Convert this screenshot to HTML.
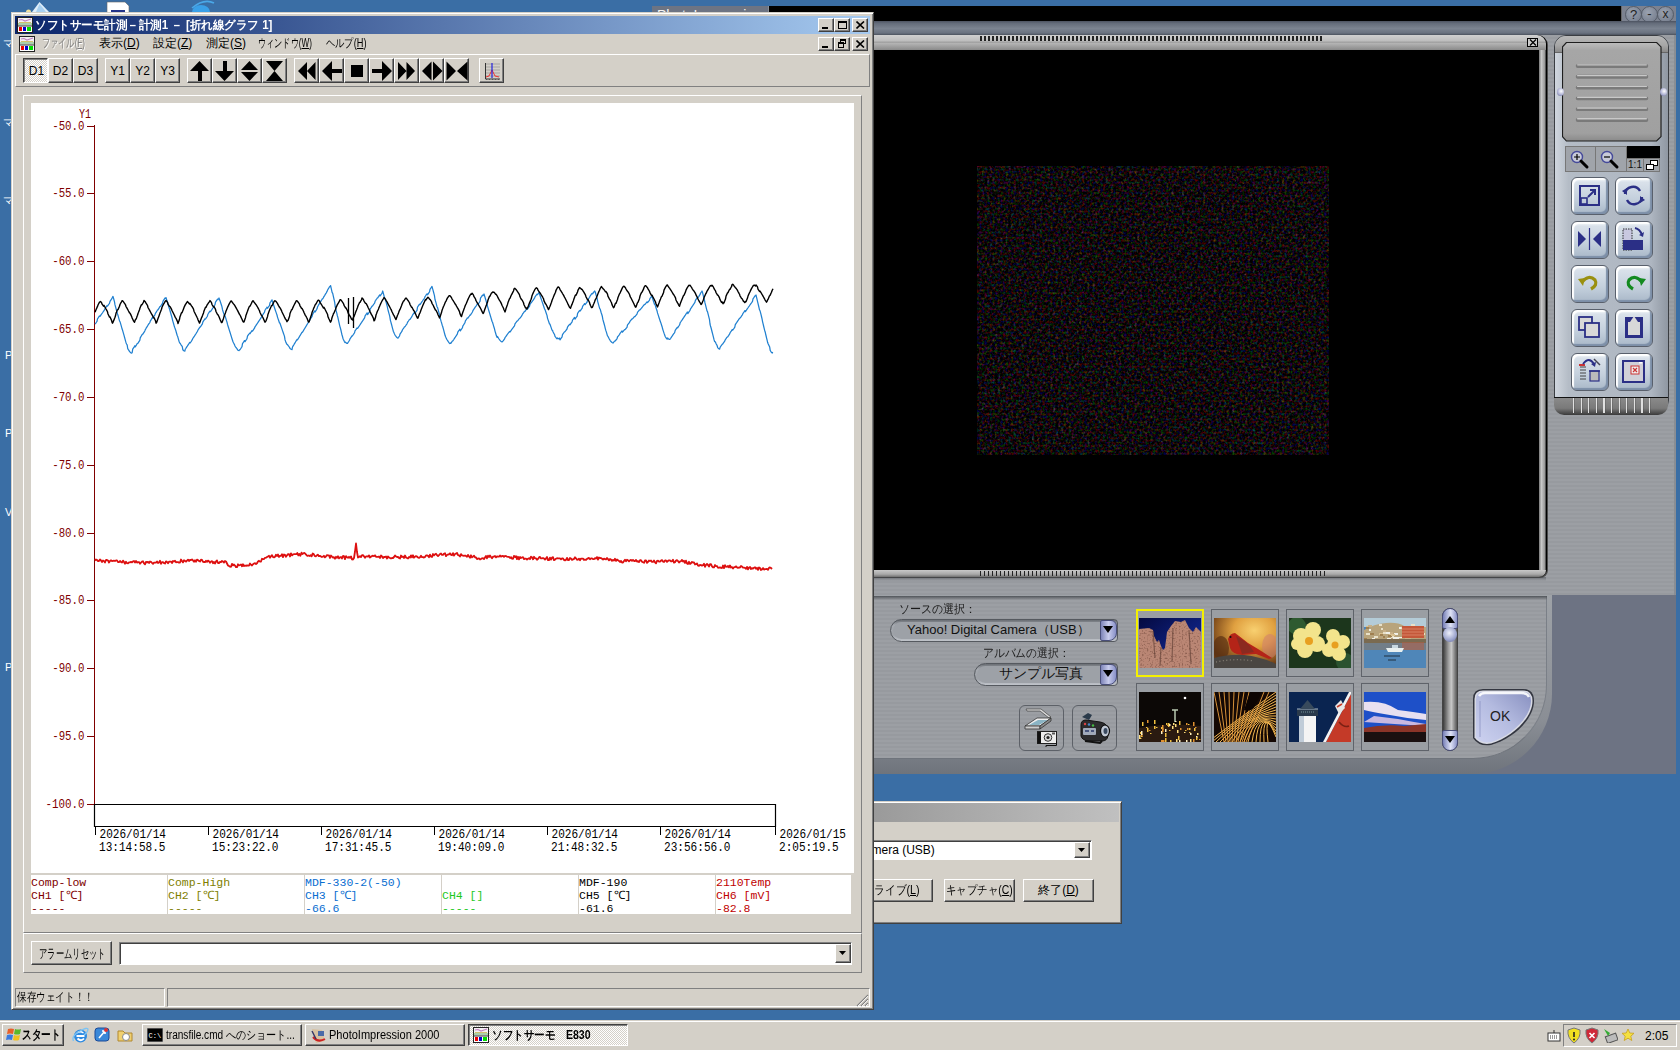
<!DOCTYPE html>
<html><head><meta charset="utf-8"><title>screen</title>
<style>
*{box-sizing:border-box;margin:0;padding:0}
html,body{width:1680px;height:1050px;overflow:hidden}
body{position:relative;background:#3a6ea5;font-family:"Liberation Sans",sans-serif;font-size:12px;color:#000}
.a{position:absolute}
.g{background:#d4d0c8}
/* raised win classic button */
.btn{position:absolute;background:#d4d0c8;border-style:solid;border-width:1px;border-color:#fff #404040 #404040 #fff;box-shadow:inset -1px -1px 0 #808080}
.btnp{position:absolute;border-style:solid;border-width:1px;border-color:#404040 #fff #fff #404040;box-shadow:inset 1px 1px 0 #808080;background-color:#e8e6e0;background-image:repeating-conic-gradient(#fff 0 25%,#d4d0c8 0 50%);background-size:2px 2px}
.raised1{position:absolute;border-style:solid;border-width:1px;border-color:#fff #808080 #808080 #fff}
.sunk1{position:absolute;border-style:solid;border-width:1px;border-color:#808080 #fff #fff #808080}
.sunk2{position:absolute;border-style:solid;border-width:1px;border-color:#808080 #fff #fff #808080;box-shadow:inset 1px 1px 0 #404040}
.mono{font-family:"Liberation Mono",monospace}
.tb{position:absolute;font-size:12px;line-height:14px;white-space:nowrap}
.pi{background-color:#999ca1;background-image:repeating-linear-gradient(180deg,#9c9fa4 0 2px,#979a9f 2px 4px)}
</style></head><body>

<!-- ===== DESKTOP FRAGMENTS ===== -->
<svg class="a" style="left:20px;top:0px" width="40" height="14"><path d="M12,12 L19.5,2 L29,12 Z" fill="#dfeefa"/><path d="M19.5,4 L23,8 L26,12 L16,12 Z" fill="#a8d0f0"/><circle cx="8.5" cy="12" r="2.5" fill="#f0e0a0"/></svg>
<svg class="a" style="left:104px;top:0px" width="30" height="14"><path d="M3,2 H21 L25,6 V14 H3 Z" fill="#fff" stroke="#666" stroke-width="0.6"/><rect x="7" y="10" width="14" height="3" fill="#223388"/></svg>
<svg class="a" style="left:184px;top:0px" width="36" height="14"><ellipse cx="17" cy="12" rx="9" ry="7" fill="#3aa0e8"/><path d="M8,8 Q20,-2 30,3" stroke="#4aa8e8" stroke-width="1.6" fill="none"/></svg>
<div class="tb" style="left:3px;top:36px;color:#fff;font-size:11px">マ</div>
<div class="tb" style="left:3px;top:115px;color:#fff;font-size:11px">マ</div>
<div class="tb" style="left:3px;top:193px;color:#fff;font-size:11px">マ</div>
<div class="tb" style="left:5px;top:348px;color:#fff;font-size:11px">P</div>
<div class="tb" style="left:5px;top:426px;color:#fff;font-size:11px">P</div>
<div class="tb" style="left:5px;top:505px;color:#fff;font-size:11px">V</div>
<div class="tb" style="left:5px;top:660px;color:#fff;font-size:11px">P</div>

<!-- ===== PHOTOIMPRESSION WINDOW ===== -->
<!-- tab -->
<div class="a" style="left:652px;top:6px;width:116px;height:16px;background:#6d7483;overflow:hidden"><div class="tb" style="left:5px;top:2px;color:#f4f4f4;font-size:14px">PhotoImpression</div></div>
<!-- black title bar -->
<div class="a" style="left:768px;top:6px;width:854px;height:16px;background:#000;border-left:1px solid #8a9098;border-right:1px solid #666;border-bottom:1px solid #555"></div>
<div class="a" style="left:1622px;top:6px;width:54px;height:16px;background:#7c8290"></div>
<div class="a" style="left:1625px;top:6px;width:17px;height:17px;border-radius:50%;background:radial-gradient(circle at 40% 35%,#9aa2b0,#6f7787);border:1px solid #555c68"><div class="tb" style="left:0;top:0;width:15px;text-align:center;font-size:13px;line-height:15px;color:#222">?</div></div>
<div class="a" style="left:1641px;top:6px;width:17px;height:17px;border-radius:50%;background:radial-gradient(circle at 40% 35%,#9aa2b0,#6f7787);border:1px solid #555c68"><div class="tb" style="left:0;top:-1px;width:15px;text-align:center;font-size:13px;line-height:15px;color:#222">-</div></div>
<div class="a" style="left:1657px;top:6px;width:17px;height:17px;border-radius:50%;background:radial-gradient(circle at 40% 35%,#9aa2b0,#6f7787);border:1px solid #555c68"><div class="tb" style="left:0;top:0;width:15px;text-align:center;font-size:12px;line-height:15px;color:#222">x</div></div>
<!-- slate band -->
<div class="a" style="left:767px;top:21px;width:909px;height:15px;background:linear-gradient(180deg,#4c5260 0,#646c7a 15%,#7b8390 50%,#6a7280 80%,#3c424c 100%)"></div>
<!-- body bg -->
<div class="a pi" style="left:873px;top:35px;width:803px;height:560px"></div>
<div class="a" style="left:1674px;top:35px;width:2px;height:560px;background:#8a8e94"></div>
<!-- viewer frame -->
<div class="a" style="left:873px;top:35px;width:674px;height:542px;background:#000;border-radius:0 9px 8px 0;box-shadow:1px 1px 0 #4a4a4a"></div>
<div class="a" style="left:873px;top:35px;width:673px;height:15px;border-radius:0 9px 0 0;background:linear-gradient(180deg,#d0d0d0 0,#bdbdbd 40%,#9c9c9c 48%,#b4b4b4 55%,#8a8a8a 100%)"></div>
<div class="a" style="left:1539px;top:50px;width:7px;height:520px;background:linear-gradient(90deg,#777,#c8c8c8 35%,#9a9a9a 80%,#333)"></div>
<div class="a" style="left:873px;top:570px;width:673px;height:7px;border-radius:0 0 9px 0;background:linear-gradient(180deg,#c8c8c8,#a8a8a8 60%,#707070)"></div>
<div class="a" style="left:980px;top:36px;width:344px;height:5px;background:repeating-linear-gradient(90deg,#222 0 1.5px,transparent 1.5px 4px)"></div>
<div class="a" style="left:980px;top:571px;width:348px;height:5px;background:repeating-linear-gradient(90deg,#222 0 1.5px,transparent 1.5px 4px)"></div>
<div class="a" style="left:1527px;top:38px;width:11px;height:9px;border:1px solid #000;background:#ccc"><svg class="a" style="left:1px;top:0px" width="8" height="7"><path d="M1,0.5 L7,6.5 M7,0.5 L1,6.5" stroke="#000" stroke-width="1.3"/></svg></div>
<!-- noisy image -->
<svg class="a" style="left:977px;top:166px" width="352" height="289"><filter id="nz" x="0" y="0" width="100%" height="100%" color-interpolation-filters="sRGB"><feTurbulence type="fractalNoise" baseFrequency="0.38" numOctaves="2" seed="5"/><feColorMatrix values="0.9 0 0 0 -0.4  0 0.75 0 0 -0.35  0 0 0.85 0 -0.39  0 0 0 0 1"/></filter><rect width="352" height="289" fill="#000"/><rect width="352" height="289" filter="url(#nz)"/></svg>
<!-- band under viewer -->
<div class="a" style="left:873px;top:577px;width:673px;height:4px;background:linear-gradient(180deg,rgba(60,64,70,.45),rgba(60,64,70,0))"></div>
<!-- right panel -->
<div class="a" style="left:1554px;top:35px;width:115px;height:379px;border-radius:12px 12px 14px 14px;background:linear-gradient(90deg,#d0d6de,#b4bcc6 12%,#aeb6c1 85%,#8f97a2);border:1px solid #3a3d42"></div>
<div class="a" style="left:1555px;top:36px;width:113px;height:17px;border-radius:11px 11px 0 0;background:linear-gradient(180deg,#b8b8b8,#a6a6a6 60%,#8a8a8a);border-bottom:1px solid #666"></div>
<svg class="a" style="left:1562px;top:42px" width="100" height="100" viewBox="0 0 102 102"><defs><linearGradient id="lidg" x1="0" y1="0" x2="0" y2="1"><stop offset="0" stop-color="#bdbdbd"/><stop offset="0.08" stop-color="#a6a6a6"/><stop offset="0.92" stop-color="#a0a0a0"/><stop offset="1" stop-color="#8a8a8a"/></linearGradient></defs><path d="M4.5,0.5 H96.5 L101,5 V96.5 L96.5,101 H4.5 L0.5,96.5 V5 Z" fill="url(#lidg)" stroke="#1e1e1e" stroke-width="1.2"/>
<g stroke-linecap="round"><path d="M16,24.5 H86 M16,35.5 H86 M16,46.5 H86 M16,57.5 H86 M16,68.5 H86 M16,79.5 H86" stroke="#7a7a7a" stroke-width="4"/><path d="M16,23.3 H86 M16,34.3 H86 M16,45.3 H86 M16,56.3 H86 M16,67.3 H86 M16,78.3 H86" stroke="#c8c8c8" stroke-width="1.4"/></g></svg>
<div class="a" style="left:1557px;top:88px;width:7px;height:8px;border-radius:50%;background:radial-gradient(circle at 60% 40%,#fff,#a8acd0 60%,#50567a)"></div>
<div class="a" style="left:1660px;top:88px;width:7px;height:8px;border-radius:50%;background:radial-gradient(circle at 60% 40%,#fff,#a8acd0 60%,#50567a)"></div>
<!-- zoom bar -->
<div class="a" style="left:1565px;top:146px;width:95px;height:26px;background:#a0a4aa;border:1px solid #777"></div>
<div class="a" style="left:1595px;top:147px;width:1px;height:24px;background:#777"></div>
<div class="a" style="left:1626px;top:146px;width:1px;height:26px;background:#777"></div>
<div class="a" style="left:1627px;top:146px;width:33px;height:12px;background:#000"></div>
<div class="a" style="left:1627px;top:158px;width:33px;height:1px;background:#777"></div>
<div class="a" style="left:1643px;top:158px;width:1px;height:14px;background:#777"></div>
<div class="tb" style="left:1627px;top:158px;width:16px;text-align:center;font-size:10px;line-height:13px;color:#111">1:1</div>
<svg class="a" style="left:1646px;top:160px" width="12" height="10"><rect x="4.5" y="0.5" width="7" height="5" fill="#fff" stroke="#000"/><rect x="0.5" y="4.5" width="7" height="5" fill="#fff" stroke="#000"/></svg>
<svg class="a" style="left:1569px;top:148px" width="24" height="22"><circle cx="8" cy="9" r="5.5" fill="#c8cad8" stroke="#454a9a" stroke-width="1.4"/><path d="M5,9 H11 M8,6 V12" stroke="#000" stroke-width="1.2"/><path d="M12,13 L18,19" stroke="#000" stroke-width="3" stroke-linecap="round"/></svg>
<svg class="a" style="left:1599px;top:148px" width="24" height="22"><circle cx="8" cy="9" r="5.5" fill="#c8cad8" stroke="#454a9a" stroke-width="1.4"/><path d="M5,9 H11" stroke="#000" stroke-width="1.2"/><path d="M12,13 L18,19" stroke="#000" stroke-width="3" stroke-linecap="round"/></svg>
<div class="a" style="left:1571px;top:177px;width:38px;height:38px;border-radius:6px;background:linear-gradient(180deg,#f4f7fa 0,#d9e1ea 12%,#c3cfdc 60%,#a9b8c8 100%);border:1px solid #59606c;box-shadow:inset -2px -2px 1px #7d8fa8,inset 2px 2px 1px #fff"></div>
<svg class="a" style="left:1571px;top:177px" width="38" height="38" viewBox="0 0 38 38"><rect x="9" y="9" width="19" height="19" fill="none" stroke="#2b2f86" stroke-width="2"/><rect x="10" y="21" width="6" height="6" fill="none" stroke="#2b2f86" stroke-width="1.6"/><path d="M17,20 L24,13 M19,13 H24 V18" stroke="#2b2f86" stroke-width="2" fill="none"/></svg>
<div class="a" style="left:1615px;top:177px;width:38px;height:38px;border-radius:6px;background:linear-gradient(180deg,#f4f7fa 0,#d9e1ea 12%,#c3cfdc 60%,#a9b8c8 100%);border:1px solid #59606c;box-shadow:inset -2px -2px 1px #7d8fa8,inset 2px 2px 1px #fff"></div>
<svg class="a" style="left:1615px;top:177px" width="38" height="38" viewBox="0 0 38 38"><path d="M10,17 A8,8 0 0 1 25,14" stroke="#2b2f86" stroke-width="2.4" fill="none"/><path d="M27,20 A8,8 0 0 1 12,23" stroke="#2b2f86" stroke-width="2.4" fill="none"/><path d="M7,14 L12,11 L12,18 Z" fill="#2b2f86"/><path d="M30,23 L25,26 L25,19 Z" fill="#2b2f86"/></svg>
<div class="a" style="left:1571px;top:221px;width:38px;height:38px;border-radius:6px;background:linear-gradient(180deg,#f4f7fa 0,#d9e1ea 12%,#c3cfdc 60%,#a9b8c8 100%);border:1px solid #59606c;box-shadow:inset -2px -2px 1px #7d8fa8,inset 2px 2px 1px #fff"></div>
<svg class="a" style="left:1571px;top:221px" width="38" height="38" viewBox="0 0 38 38"><path d="M7,10 L15,18 L7,26 Z M30,10 L22,18 L30,26 Z" fill="#2b2f86"/><path d="M18.5,7 V29" stroke="#2b2f86" stroke-width="1.2"/></svg>
<div class="a" style="left:1615px;top:221px;width:38px;height:38px;border-radius:6px;background:linear-gradient(180deg,#f4f7fa 0,#d9e1ea 12%,#c3cfdc 60%,#a9b8c8 100%);border:1px solid #59606c;box-shadow:inset -2px -2px 1px #7d8fa8,inset 2px 2px 1px #fff"></div>
<svg class="a" style="left:1615px;top:221px" width="38" height="38" viewBox="0 0 38 38"><rect x="8" y="8" width="9" height="21" fill="#c8c8e0" stroke="#000" stroke-width="0.8" stroke-dasharray="1.5 1"/><rect x="8" y="19" width="20" height="10" fill="#2b2f86"/><path d="M20,7 Q25,8 27,14" stroke="#2b2f86" stroke-width="2" fill="none"/><path d="M24,14 L28,16 L29,11 Z" fill="#2b2f86"/></svg>
<div class="a" style="left:1571px;top:265px;width:38px;height:38px;border-radius:6px;background:linear-gradient(180deg,#f4f7fa 0,#d9e1ea 12%,#c3cfdc 60%,#a9b8c8 100%);border:1px solid #59606c;box-shadow:inset -2px -2px 1px #7d8fa8,inset 2px 2px 1px #fff"></div>
<svg class="a" style="left:1571px;top:265px" width="38" height="38" viewBox="0 0 38 38"><path d="M11,17 Q18,9 24,15 Q27,20 20,24" stroke="#9a9010" stroke-width="3.2" fill="none"/><path d="M7,14 L14,13 L12,21 Z" fill="#9a9010"/></svg>
<div class="a" style="left:1615px;top:265px;width:38px;height:38px;border-radius:6px;background:linear-gradient(180deg,#f4f7fa 0,#d9e1ea 12%,#c3cfdc 60%,#a9b8c8 100%);border:1px solid #59606c;box-shadow:inset -2px -2px 1px #7d8fa8,inset 2px 2px 1px #fff"></div>
<svg class="a" style="left:1615px;top:265px" width="38" height="38" viewBox="0 0 38 38"><path d="M27,17 Q20,9 14,15 Q11,20 18,24" stroke="#138a20" stroke-width="3.2" fill="none"/><path d="M31,14 L24,13 L26,21 Z" fill="#138a20"/></svg>
<div class="a" style="left:1571px;top:309px;width:38px;height:38px;border-radius:6px;background:linear-gradient(180deg,#f4f7fa 0,#d9e1ea 12%,#c3cfdc 60%,#a9b8c8 100%);border:1px solid #59606c;box-shadow:inset -2px -2px 1px #7d8fa8,inset 2px 2px 1px #fff"></div>
<svg class="a" style="left:1571px;top:309px" width="38" height="38" viewBox="0 0 38 38"><rect x="8" y="8" width="13" height="13" fill="#d8d8d8" stroke="#2b2f86" stroke-width="1.8"/><rect x="14" y="14" width="14" height="14" fill="#d8d8d8" stroke="#2b2f86" stroke-width="1.8"/></svg>
<div class="a" style="left:1615px;top:309px;width:38px;height:38px;border-radius:6px;background:linear-gradient(180deg,#f4f7fa 0,#d9e1ea 12%,#c3cfdc 60%,#a9b8c8 100%);border:1px solid #59606c;box-shadow:inset -2px -2px 1px #7d8fa8,inset 2px 2px 1px #fff"></div>
<svg class="a" style="left:1615px;top:309px" width="38" height="38" viewBox="0 0 38 38"><rect x="10" y="8" width="18" height="21" fill="#2b2f86"/><rect x="13" y="13" width="12" height="13" fill="#d8d8d8"/><path d="M15,13 L19,7 L23,13 Z" fill="#d8d8d8"/></svg>
<div class="a" style="left:1571px;top:353px;width:38px;height:38px;border-radius:6px;background:linear-gradient(180deg,#f4f7fa 0,#d9e1ea 12%,#c3cfdc 60%,#a9b8c8 100%);border:1px solid #59606c;box-shadow:inset -2px -2px 1px #7d8fa8,inset 2px 2px 1px #fff"></div>
<svg class="a" style="left:1571px;top:353px" width="38" height="38" viewBox="0 0 38 38"><path d="M9,14 H15 M9,17 H15 M9,20 H15 M9,23 H15 M9,26 H15" stroke="#444" stroke-width="1"/><path d="M8,12 H14" stroke="#c33" stroke-width="2"/><path d="M12,11 Q18,3 23,11" stroke="#2b2f86" stroke-width="1.8" fill="none"/><path d="M20,11 L24,14 L25,9 Z" fill="#2b2f86"/><rect x="19" y="18" width="9" height="10" fill="#bbb" stroke="#2b2f86" stroke-width="1.2"/><path d="M18,18 H29" stroke="#2b2f86" stroke-width="1.5"/><path d="M23,6 L29,12" stroke="#445" stroke-width="1.5"/></svg>
<div class="a" style="left:1615px;top:353px;width:38px;height:38px;border-radius:6px;background:linear-gradient(180deg,#f4f7fa 0,#d9e1ea 12%,#c3cfdc 60%,#a9b8c8 100%);border:1px solid #59606c;box-shadow:inset -2px -2px 1px #7d8fa8,inset 2px 2px 1px #fff"></div>
<svg class="a" style="left:1615px;top:353px" width="38" height="38" viewBox="0 0 38 38"><rect x="8" y="8" width="21" height="21" fill="#d0d0d8" stroke="#2b2f86" stroke-width="2"/><rect x="16" y="13" width="8" height="8" fill="#eee" stroke="#c33" stroke-width="1"/><path d="M18,15 L22,19 M22,15 L18,19" stroke="#c33" stroke-width="1.2"/><rect x="24" y="9" width="3" height="1.5" fill="#fff"/></svg>
<!-- grip -->
<div class="a" style="left:1554px;top:397px;width:114px;height:18px;border-radius:0 0 10px 10px;background:linear-gradient(180deg,#8a8a8a,#7a7a7a 60%,#3a3a3a);border-top:1px solid #111"></div>
<div class="a" style="left:1573px;top:398px;width:78px;height:15px;background:repeating-linear-gradient(90deg,#e0e0e0 0 1.2px,rgba(60,60,60,.25) 1.2px 2.2px,transparent 2.2px 7.6px)"></div>
<!-- slate area bottom right -->
<div class="a" style="left:1380px;top:595px;width:296px;height:179px;background:#6d7383"></div>
<!-- bottom panel with bevel -->
<div class="a" style="left:873px;top:595px;width:679px;height:179px;border-radius:0 0 80px 0;background:linear-gradient(180deg,#9ea2a7,#8a8e95 70%,#6f747c)"></div>
<div class="a pi" style="left:873px;top:596px;width:674px;height:163px;border-radius:0 0 74px 0;border-bottom:1px solid #6f747c;border-right:1px solid #7a7f87"></div>
<div class="a" style="left:873px;top:596px;width:674px;height:4px;background:linear-gradient(180deg,#505459,rgba(158,162,167,0))"></div>
<!-- labels -->
<div class="tb" style="left:899px;top:602px;font-size:12px;color:#1a1a1a;transform:scaleX(0.92);transform-origin:0 0">ソースの選択：</div>
<div class="a" style="left:890px;top:619px;width:228px;height:23px;border-radius:12px 4px 4px 12px;background:linear-gradient(180deg,#6a6e74,#a6aab0 25%,#9ea2a8 70%,#c0c4ca);border:1px solid #55595f"></div>
<div class="a" style="left:893px;top:622px;width:214px;height:17px;border-radius:9px 0 0 9px;background:#9da1a7"></div>
<div class="tb" style="left:907px;top:622px;font-size:13px;line-height:16px;color:#111">Yahoo! Digital Camera（USB）</div>
<div class="a" style="left:1100px;top:620px;width:17px;height:21px;border-radius:2px 6px 8px 2px;background:linear-gradient(90deg,#7d84b8,#c8ccec 50%,#8890c8);border:1px solid #4a4f7a"><svg class="a" style="left:2px;top:5px" width="10" height="8"><path d="M0,0 H10 L5,7 Z" fill="#000"/></svg></div>
<div class="tb" style="left:983px;top:646px;font-size:12px;color:#1a1a1a;transform:scaleX(0.9);transform-origin:0 0">アルバムの選択：</div>
<div class="a" style="left:974px;top:663px;width:144px;height:23px;border-radius:12px 4px 4px 12px;background:linear-gradient(180deg,#6a6e74,#a6aab0 25%,#9ea2a8 70%,#c0c4ca);border:1px solid #55595f"></div>
<div class="a" style="left:977px;top:666px;width:130px;height:17px;border-radius:9px 0 0 9px;background:#9da1a7"></div>
<div class="tb" style="left:999px;top:665px;font-size:14px;line-height:17px;color:#111">サンプル写真</div>
<div class="a" style="left:1100px;top:664px;width:17px;height:21px;border-radius:2px 6px 8px 2px;background:linear-gradient(90deg,#7d84b8,#c8ccec 50%,#8890c8);border:1px solid #4a4f7a"><svg class="a" style="left:2px;top:5px" width="10" height="8"><path d="M0,0 H10 L5,7 Z" fill="#000"/></svg></div>
<!-- scanner / camcorder buttons -->
<div class="a" style="left:1019px;top:705px;width:45px;height:46px;border-radius:6px;border:1px solid #5d6168"></div>
<svg class="a" style="left:1019px;top:705px" width="45" height="46"><path d="M7,4 L22,4 L32,12 L30,13 L21,6 L8,6 Z" fill="#d8d8d8" stroke="#444" stroke-width="0.7"/><path d="M6,21 L18,13 L32,13 L21,21 Z" fill="#eee" stroke="#333" stroke-width="0.8"/><path d="M10,20 L19,15 L29,15 L20,20 Z" fill="#8ab4c4"/><path d="M6,21 L21,21 L21,24 L6,24 Z" fill="#ccc" stroke="#333" stroke-width="0.8"/><path d="M21,21 L32,13 L32,16 L21,24 Z" fill="#888" stroke="#333" stroke-width="0.8"/><rect x="18.5" y="26.5" width="19" height="12" fill="#eee" stroke="#222"/><rect x="18.5" y="27" width="3.5" height="11.5" fill="#111"/><circle cx="29" cy="32.5" r="3.8" fill="#ddd" stroke="#333" stroke-width="1"/><circle cx="29" cy="32.5" r="1.6" fill="#222"/><rect x="33" y="27.5" width="3" height="2" fill="#555"/><path d="M37.5,36 V40.5 H27 V42" stroke="#111" fill="none" stroke-width="1"/></svg>
<div class="a" style="left:1072px;top:705px;width:45px;height:46px;border-radius:6px;border:1px solid #5d6168"></div>
<svg class="a" style="left:1072px;top:705px" width="45" height="46"><path d="M10,12 L16,8 L20,10 L17,15 Z" fill="#2a3a4a"/><path d="M9,20 Q9,15 14,15 L28,17 Q34,18 35,22 L36,31 Q35,36 30,36 L16,36 Q10,35 9,31 Z" fill="#2c2c2e" stroke="#111"/><rect x="11" y="23" width="13" height="7" rx="1" fill="#a0aabb"/><path d="M13,26 H17 M19,26 H22" stroke="#2a3a6a" stroke-width="1.6"/><circle cx="13" cy="19" r="1.2" fill="#d44"/><circle cx="17" cy="19.5" r="1.2" fill="#48c"/><circle cx="21" cy="20.5" r="1.2" fill="#4b4"/><ellipse cx="33" cy="26" rx="4.5" ry="6" fill="#c0c8d4" stroke="#111" stroke-width="1.2"/><ellipse cx="33.5" cy="26" rx="2" ry="3" fill="#3a4a60"/><path d="M13,36 L28,38 L30,36" stroke="#111" stroke-width="2" fill="none"/></svg>
<div class="a" style="left:1136px;top:609px;width:68px;height:68px;border:2px solid #f4f000;background:#9a9ea3"></div>
<svg class="a" style="left:1139px;top:618px" width="62" height="50" viewBox="0 0 62 50"><defs><linearGradient id="sky1" x1="0" y1="0" x2="1" y2="1"><stop offset="0" stop-color="#050a40"/><stop offset="1" stop-color="#1430a8"/></linearGradient><filter id="rk" color-interpolation-filters="sRGB"><feTurbulence type="fractalNoise" baseFrequency="0.6" numOctaves="1" seed="2"/><feColorMatrix values="0 0 0 0 0.25  0 0 0 0 0.12  0 0 0 0 0.08  0 0 0 -1.5 0.72"/><feComposite in2="SourceGraphic" operator="in"/></filter></defs><rect width="62" height="50" fill="url(#sky1)"/><path d="M0,11 L10,10 L14,12 L15,18 L18,24 L20,22 L22,28 L24,32 L26,30 L28,14 L32,8 L36,3 L42,4 L46,2 L50,10 L54,14 L57,9 L60,12 L62,14 V50 H0 Z" fill="#ba8674"/><path d="M0,11 L10,10 L14,12 L15,18 L18,24 L20,22 L22,28 L24,32 L26,30 L28,14 L32,8 L36,3 L42,4 L46,2 L50,10 L54,14 L57,9 L60,12 L62,14 V50 H0 Z" fill="#000" filter="url(#rk)"/><path d="M14,13 L16,40 M22,29 L21,48 M34,10 L33,44 M50,12 L52,46" stroke="#5a3a30" stroke-width="1.2" opacity=".6"/></svg>
<div class="a" style="left:1211px;top:609px;width:68px;height:68px;border:1px solid #5f636a;background:#9a9ea3"></div>
<svg class="a" style="left:1214px;top:618px" width="62" height="50" viewBox="0 0 62 50"><defs><radialGradient id="cbg" cx="0.65" cy="0.25" r="0.75"><stop offset="0" stop-color="#f8d070"/><stop offset="0.45" stop-color="#e0a040"/><stop offset="1" stop-color="#6a3a14"/></radialGradient></defs><rect width="62" height="50" fill="url(#cbg)"/><ellipse cx="7" cy="30" rx="8" ry="12" fill="#5a3012" opacity=".7"/><ellipse cx="56" cy="28" rx="8" ry="12" fill="#d08070" opacity=".55"/><path d="M14,21 Q16,15 21,15 L25,18 L34,25 L44,31 L58,40 L55,41 L42,36 L28,37 Q18,36 16,30 Z" fill="#b42418"/><path d="M22,18 Q30,22 36,28 L40,34 L28,36 Z" fill="#6a3028" opacity=".55"/><circle cx="16.5" cy="19" r="1" fill="#111"/><path d="M0,40 Q16,36 30,37 Q48,39 62,46 V50 H0 Z" fill="#4a4642"/><path d="M2,44 Q20,40 40,43" stroke="#8a8478" stroke-width="1.2" fill="none" stroke-dasharray="1 2.5"/></svg>
<div class="a" style="left:1286px;top:609px;width:68px;height:68px;border:1px solid #5f636a;background:#9a9ea3"></div>
<svg class="a" style="left:1289px;top:618px" width="62" height="50" viewBox="0 0 62 50"><rect width="62" height="50" fill="#1c361c"/><circle cx="8" cy="8" r="9" fill="#2e5a30"/><circle cx="56" cy="44" r="9" fill="#2a5230"/><g fill="#f3e48c"><circle cx="12" cy="18" r="8"/><circle cx="24" cy="12" r="8"/><circle cx="28" cy="26" r="8"/><circle cx="16" cy="32" r="8"/><circle cx="8" cy="26" r="6"/><circle cx="20" cy="23" r="9"/><circle cx="44" cy="18" r="7"/><circle cx="54" cy="24" r="7"/><circle cx="50" cy="36" r="7"/><circle cx="40" cy="32" r="7"/><circle cx="46" cy="27" r="8"/></g><circle cx="20" cy="23" r="4" fill="#e8a020"/><circle cx="46" cy="27" r="3.5" fill="#e8a020"/></svg>
<div class="a" style="left:1361px;top:609px;width:68px;height:68px;border:1px solid #5f636a;background:#9a9ea3"></div>
<svg class="a" style="left:1364px;top:618px" width="62" height="50" viewBox="0 0 62 50"><rect width="62" height="50" fill="#4f86b8"/><rect width="62" height="9" fill="#b4ccd8"/><path d="M0,12 Q10,6 22,5 Q34,4 40,8 L62,9 V23 H0 Z" fill="#b8a47c"/><rect x="15" y="15" width="4" height="2" fill="#d8c090"/><rect x="23" y="20" width="4" height="2" fill="#f0f0e8"/><rect x="40" y="15" width="2" height="2" fill="#c8b088"/><rect x="0" y="20" width="3" height="2" fill="#a08050"/><rect x="35" y="9" width="2" height="2" fill="#f0f0e8"/><rect x="34" y="19" width="4" height="2" fill="#f0f0e8"/><rect x="25" y="16" width="2" height="2" fill="#d8c090"/><rect x="40" y="8" width="4" height="2" fill="#f0f0e8"/><rect x="47" y="6" width="4" height="2" fill="#e8e0c8"/><rect x="10" y="18" width="4" height="2" fill="#e8e0c8"/><rect x="19" y="18" width="2" height="2" fill="#a08050"/><rect x="30" y="15" width="4" height="2" fill="#f0f0e8"/><rect x="45" y="18" width="3" height="2" fill="#f0f0e8"/><rect x="46" y="18" width="4" height="2" fill="#f0f0e8"/><rect x="8" y="20" width="3" height="2" fill="#e8e0c8"/><rect x="2" y="8" width="3" height="2" fill="#d8c090"/><rect x="16" y="16" width="3" height="2" fill="#a08050"/><rect x="26" y="14" width="3" height="2" fill="#c8b088"/><rect x="22" y="14" width="4" height="2" fill="#f0f0e8"/><rect x="37" y="9" width="3" height="2" fill="#e8e0c8"/><rect x="54" y="10" width="4" height="2" fill="#d8c090"/><rect x="44" y="19" width="3" height="2" fill="#c8b088"/><rect x="57" y="15" width="4" height="2" fill="#e8e0c8"/><rect x="45" y="16" width="2" height="2" fill="#c8b088"/><rect x="17" y="10" width="2" height="2" fill="#e8e0c8"/><rect x="30" y="19" width="4" height="2" fill="#f0f0e8"/><rect x="5" y="11" width="2" height="2" fill="#f0f0e8"/><rect x="57" y="8" width="2" height="2" fill="#a08050"/><rect x="27" y="18" width="3" height="2" fill="#e8e0c8"/><rect x="2" y="15" width="4" height="2" fill="#e8e0c8"/><rect x="24" y="17" width="4" height="2" fill="#a08050"/><rect x="35" y="20" width="3" height="2" fill="#c8b088"/><rect x="15" y="6" width="3" height="2" fill="#e8e0c8"/><rect x="4" y="7" width="4" height="2" fill="#c8b088"/><rect x="2" y="9" width="3" height="2" fill="#a08050"/><rect x="39" y="10" width="2" height="2" fill="#e8e0c8"/><rect x="55" y="11" width="3" height="2" fill="#a08050"/><rect x="8" y="20" width="3" height="2" fill="#f0f0e8"/><rect x="29" y="19" width="4" height="2" fill="#f0f0e8"/><rect x="41" y="19" width="4" height="2" fill="#c8b088"/><rect x="6" y="15" width="4" height="2" fill="#a08050"/><rect x="27" y="16" width="4" height="2" fill="#d8c090"/><rect x="19" y="12" width="3" height="2" fill="#c8b088"/><rect x="19" y="14" width="3" height="2" fill="#e8e0c8"/><rect x="50" y="12" width="4" height="2" fill="#a08050"/><rect x="38" y="8" width="22" height="12" fill="#c4583a"/><path d="M38,11 H60 M38,14 H60 M38,17 H60" stroke="#e8a080" stroke-width="0.6"/><rect x="0" y="21" width="62" height="4" fill="#7a6a50"/><path d="M0,25 H62 V32 H0 Z" fill="#8a7a68" opacity=".6"/><rect x="38" y="24" width="22" height="8" fill="#b85a40" opacity=".5"/><path d="M22,30 L40,30 L38,34 L24,34 Z" fill="#e8f0f0"/><rect x="28" y="27" width="6" height="3" fill="#c8d8e0"/><path d="M20,38 L36,38 M24,42 L32,42" stroke="#203040" stroke-width="1"/></svg>
<div class="a" style="left:1136px;top:683px;width:68px;height:68px;border:1px solid #5f636a;background:#9a9ea3"></div>
<svg class="a" style="left:1139px;top:692px" width="62" height="50" viewBox="0 0 62 50"><rect width="62" height="50" fill="#0c0806"/><circle cx="46" cy="6" r="1.3" fill="#fff"/><path d="M36,18 L36,30 M33,18 H39" stroke="#b8c8b0" stroke-width="1.5"/><path d="M0,36 Q30,30 62,34 V50 H0 Z" fill="#2a1a10"/><rect x="1" y="40" width="1.5" height="2" fill="#f0c040"/><rect x="40" y="48" width="1.5" height="3" fill="#fff0c0"/><rect x="22" y="39" width="1.5" height="3" fill="#fff0c0"/><rect x="1" y="46" width="1.5" height="1" fill="#f0c040"/><rect x="23" y="36" width="1.5" height="4" fill="#e09030"/><rect x="37" y="47" width="1.5" height="3" fill="#ffe080"/><rect x="23" y="33" width="1.5" height="3" fill="#e09030"/><rect x="54" y="47" width="1.5" height="3" fill="#e09030"/><rect x="50" y="40" width="1.5" height="1" fill="#f0c040"/><rect x="36" y="32" width="1.5" height="3" fill="#ffe080"/><rect x="41" y="36" width="1.5" height="2" fill="#e09030"/><rect x="11" y="41" width="1.5" height="1" fill="#f0c040"/><rect x="38" y="38" width="1.5" height="3" fill="#ffe080"/><rect x="28" y="33" width="1.5" height="1" fill="#e09030"/><rect x="47" y="48" width="1.5" height="2" fill="#fff0c0"/><rect x="17" y="35" width="1.5" height="1" fill="#f0c040"/><rect x="33" y="34" width="1.5" height="3" fill="#ffe080"/><rect x="55" y="36" width="1.5" height="3" fill="#f0c040"/><rect x="51" y="47" width="1.5" height="3" fill="#ffe080"/><rect x="26" y="37" width="1.5" height="3" fill="#fff0c0"/><rect x="22" y="48" width="1.5" height="4" fill="#e09030"/><rect x="26" y="46" width="1.5" height="4" fill="#f0c040"/><rect x="58" y="41" width="1.5" height="2" fill="#ffe080"/><rect x="0" y="43" width="1.5" height="4" fill="#ffe080"/><rect x="2" y="42" width="1.5" height="3" fill="#e09030"/><rect x="56" y="35" width="1.5" height="1" fill="#e09030"/><rect x="7" y="35" width="1.5" height="1" fill="#f0c040"/><rect x="57" y="44" width="1.5" height="2" fill="#fff0c0"/><rect x="36" y="29" width="1.5" height="1" fill="#fff0c0"/><rect x="47" y="31" width="1.5" height="2" fill="#e09030"/><rect x="15" y="28" width="1.5" height="4" fill="#f0c040"/><rect x="60" y="47" width="1.5" height="1" fill="#e09030"/><rect x="8" y="36" width="1.5" height="4" fill="#f0c040"/><rect x="22" y="35" width="1.5" height="2" fill="#f0c040"/><rect x="34" y="31" width="1.5" height="2" fill="#ffe080"/><rect x="50" y="36" width="1.5" height="2" fill="#f0c040"/><rect x="31" y="48" width="1.5" height="4" fill="#f0c040"/><rect x="48" y="36" width="1.5" height="2" fill="#e09030"/><rect x="39" y="44" width="1.5" height="4" fill="#f0c040"/><rect x="30" y="38" width="1.5" height="1" fill="#f0c040"/><rect x="49" y="32" width="1.5" height="1" fill="#f0c040"/><rect x="3" y="30" width="1.5" height="4" fill="#f0c040"/><rect x="54" y="30" width="1.5" height="4" fill="#e09030"/><rect x="10" y="38" width="1.5" height="1" fill="#e09030"/><rect x="24" y="48" width="1.5" height="4" fill="#e09030"/><rect x="23" y="36" width="1.5" height="2" fill="#e09030"/><rect x="27" y="31" width="1.5" height="2" fill="#f0c040"/><rect x="45" y="40" width="1.5" height="1" fill="#ffe080"/><rect x="2" y="39" width="1.5" height="4" fill="#fff0c0"/><rect x="40" y="29" width="1.5" height="4" fill="#f0c040"/><rect x="23" y="48" width="1.5" height="4" fill="#e09030"/><rect x="26" y="41" width="1.5" height="4" fill="#f0c040"/><rect x="15" y="34" width="1.5" height="3" fill="#f0c040"/><rect x="51" y="41" width="1.5" height="2" fill="#fff0c0"/><rect x="8" y="28" width="1.5" height="3" fill="#e09030"/><rect x="57" y="45" width="1.5" height="3" fill="#f0c040"/><rect x="29" y="31" width="1.5" height="4" fill="#f0c040"/><rect x="46" y="38" width="1.5" height="1" fill="#f0c040"/><rect x="30" y="32" width="1.5" height="2" fill="#fff0c0"/><rect x="2" y="44" width="1.5" height="1" fill="#f0c040"/></svg>
<div class="a" style="left:1211px;top:683px;width:68px;height:68px;border:1px solid #5f636a;background:#9a9ea3"></div>
<svg class="a" style="left:1214px;top:692px" width="62" height="50" viewBox="0 0 62 50"><rect width="62" height="50" fill="#140804"/><path d="M-6,50 Q20,30 62,0" stroke="#f4b850" stroke-width="1" fill="none"/><path d="M-2,50 Q22,29 62,3" stroke="#f4b850" stroke-width="1" fill="none"/><path d="M2,50 Q24,28 62,6" stroke="#f4b850" stroke-width="1" fill="none"/><path d="M6,50 Q26,27 62,9" stroke="#f4b850" stroke-width="1" fill="none"/><path d="M10,50 Q28,26 62,12" stroke="#f4b850" stroke-width="1" fill="none"/><path d="M14,50 Q30,25 62,15" stroke="#f4b850" stroke-width="1" fill="none"/><path d="M18,50 Q32,24 62,18" stroke="#f4b850" stroke-width="1" fill="none"/><path d="M22,50 Q34,23 62,21" stroke="#f4b850" stroke-width="1" fill="none"/><path d="M26,50 Q36,22 62,24" stroke="#f4b850" stroke-width="1" fill="none"/><path d="M30,50 Q38,21 62,27" stroke="#f4b850" stroke-width="1" fill="none"/><path d="M34,50 Q40,20 62,30" stroke="#f4b850" stroke-width="1" fill="none"/><path d="M38,50 Q42,19 62,33" stroke="#f4b850" stroke-width="1" fill="none"/><path d="M42,50 Q44,18 62,36" stroke="#f4b850" stroke-width="1" fill="none"/><path d="M46,50 Q46,17 62,39" stroke="#f4b850" stroke-width="1" fill="none"/><path d="M50,50 Q48,16 62,42" stroke="#f4b850" stroke-width="1" fill="none"/><path d="M54,50 Q50,15 62,45" stroke="#f4b850" stroke-width="1" fill="none"/><path d="M0,0 L10,50" stroke="#eca040" stroke-width="0.9"/><path d="M5,0 L12,50" stroke="#eca040" stroke-width="0.9"/><path d="M10,0 L14,50" stroke="#eca040" stroke-width="0.9"/><path d="M15,0 L16,50" stroke="#eca040" stroke-width="0.9"/><path d="M20,0 L18,50" stroke="#eca040" stroke-width="0.9"/><path d="M25,0 L20,50" stroke="#eca040" stroke-width="0.9"/><path d="M30,0 L22,50" stroke="#eca040" stroke-width="0.9"/><path d="M35,0 L24,50" stroke="#eca040" stroke-width="0.9"/><path d="M40,0 L26,50" stroke="#eca040" stroke-width="0.9"/><path d="M45,0 L28,50" stroke="#eca040" stroke-width="0.9"/><path d="M50,0 L30,50" stroke="#eca040" stroke-width="0.9"/><path d="M55,0 L32,50" stroke="#eca040" stroke-width="0.9"/><path d="M36,0 L48,0 L40,16 Q36,20 30,18 Z" fill="#0c0402"/></svg>
<div class="a" style="left:1286px;top:683px;width:68px;height:68px;border:1px solid #5f636a;background:#9a9ea3"></div>
<svg class="a" style="left:1289px;top:692px" width="62" height="50" viewBox="0 0 62 50"><rect width="62" height="50" fill="#0a2450"/><path d="M37,50 L62,2 V50 Z" fill="#c43a28"/><path d="M34,50 L60,0 L62,0 L62,2 L37,50 Z" fill="#f4f4f4"/><path d="M46,14 L52,8 L56,16 L50,22 Z" fill="#e8e8e8"/><path d="M48,15 L53,12" stroke="#c43a28" stroke-width="1.5"/><rect x="10" y="24" width="17" height="26" fill="#f4f4f4"/><rect x="10" y="24" width="5" height="26" fill="#c0ccd8"/><rect x="8" y="17" width="21" height="7" fill="#2a3a4c"/><path d="M8,17 H29" stroke="#a8b8c8" stroke-width="1"/><path d="M11,17 L18.5,8 L26,17 Z" fill="#384a5c"/><path d="M12,20 H25" stroke="#8aa" stroke-width="0.8" stroke-dasharray="1 1"/><path d="M50,30 Q55,36 60,34" stroke="#7a2014" stroke-width="1.5" fill="none"/></svg>
<div class="a" style="left:1361px;top:683px;width:68px;height:68px;border:1px solid #5f636a;background:#9a9ea3"></div>
<svg class="a" style="left:1364px;top:692px" width="62" height="50" viewBox="0 0 62 50"><rect width="62" height="50" fill="#1e50c8"/><path d="M0,10 Q20,8 34,18 Q50,20 62,22 V28 Q40,26 20,22 Q8,20 0,18 Z" fill="#e8e0f0"/><path d="M10,24 Q30,26 50,30 L62,32 V34 Q30,32 0,30 Z" fill="#c8b8e0"/><path d="M0,36 Q20,32 40,34 L62,32 V40 H0 Z" fill="#8a3428"/><rect y="40" width="62" height="10" fill="#1a1010"/></svg>
<!-- scrollbar -->
<div class="a" style="left:1442px;top:608px;width:16px;height:143px;border-radius:8px;background:linear-gradient(90deg,#3a3a3a,#a0a0a0 40%,#c8c8c8 60%,#555);border:1px solid #444"></div>
<div class="a" style="left:1442px;top:608px;width:16px;height:21px;border-radius:8px 8px 2px 2px;background:linear-gradient(90deg,#7880b8,#dfe3f6 55%,#8a92c6);border:1px solid #4a4f7a"><svg class="a" style="left:2px;top:7px" width="10" height="8"><path d="M0,7 H10 L5,0 Z" fill="#000"/></svg></div>
<div class="a" style="left:1443px;top:627px;width:14px;height:15px;border-radius:50%;background:radial-gradient(circle at 45% 40%,#eef0fa,#9aa2cc 60%,#5a6090)"></div>
<div class="a" style="left:1442px;top:730px;width:16px;height:21px;border-radius:2px 2px 8px 8px;background:linear-gradient(90deg,#7880b8,#dfe3f6 55%,#8a92c6);border:1px solid #4a4f7a"><svg class="a" style="left:2px;top:5px" width="10" height="8"><path d="M0,0 H10 L5,7 Z" fill="#000"/></svg></div>
<!-- OK button -->
<svg class="a" style="left:1471px;top:687px" width="66" height="62" viewBox="0 0 66 62"><defs><linearGradient id="okg" x1="0" y1="1" x2="1" y2="0"><stop offset="0" stop-color="#cdd2f0"/><stop offset="0.5" stop-color="#b4bbe0"/><stop offset="1" stop-color="#8890c0"/></linearGradient></defs>
<path d="M2,12 Q2,2 12,2 L52,2 Q63,2 63,14 C63,32 42,52 20,58 Q8,60 2,51 Z" fill="#333640"/>
<path d="M3.5,12 Q3.5,3.5 12,3.5 L52,3.5 Q61.5,3.5 61.5,14 C61.5,31 41,50.5 20,56.5 Q9,58.5 3.5,50.5 Z" fill="#d8dae4"/>
<path d="M5,12.5 Q5,5 12,5 L52,5 Q60,5 60,14 C60,30 40,49 20,55 Q10,57 5,50 Z" fill="url(#okg)"/>
<path d="M8,9 Q10,6 14,6 L50,6 Q56,6 58,10" stroke="#fff" stroke-width="2.5" fill="none" opacity=".9"/>
<path d="M9,14 V50" stroke="#7a82b8" stroke-width="1" opacity=".6"/>
<text x="19" y="34" font-family="Liberation Sans" font-size="14" fill="#222">OK</text></svg>


<!-- ===== CAPTURE DIALOG ===== -->
<div class="a" style="left:700px;top:801px;width:422px;height:123px;background:#d4d0c8;border:1px solid;border-color:#d4d0c8 #404040 #404040 #d4d0c8;box-shadow:inset 1px 1px 0 #fff,inset -1px -1px 0 #808080"></div>
<div class="a" style="left:704px;top:803px;width:415px;height:19px;background:linear-gradient(90deg,#808080,#c0c0c0)"></div>
<div class="sunk2" style="left:756px;top:840px;width:336px;height:20px;background:#fff"><div class="tb" style="left:22px;top:2px;font-size:12px">Yahoo! Digital Camera (USB)</div></div>
<div class="btn" style="left:1074px;top:842px;width:16px;height:16px"><svg class="a" style="left:3px;top:5px" width="8" height="5"><path d="M0,0 H7 L3.5,4 Z" fill="#000"/></svg></div>
<div class="btn" style="left:862px;top:879px;width:71px;height:23px"><div class="tb" style="left:11px;top:3px;transform:scaleX(0.9);transform-origin:0 0">ライブ(<u>L</u>)</div></div>
<div class="btn" style="left:944px;top:879px;width:71px;height:23px"><div class="tb" style="left:1px;top:3px;transform:scaleX(0.87);transform-origin:0 0">キャプチャ(<u>C</u>)</div></div>
<div class="btn" style="left:1023px;top:879px;width:71px;height:23px"><div class="tb" style="left:0;top:3px;width:69px;text-align:center">終了(<u>D</u>)</div></div>

<!-- ===== MAIN WINDOW ===== -->
<div class="a" style="left:11px;top:12px;width:863px;height:998px;background:#d4d0c8;border:1px solid;border-color:#d4d0c8 #404040 #404040 #d4d0c8;box-shadow:inset 1px 1px 0 #fff,inset -1px -1px 0 #808080"></div>
<!-- title bar -->
<div class="a" style="left:15px;top:16px;width:855px;height:18px;background:linear-gradient(90deg,#0a246a,#a6caf0)"></div>
<svg class="a" style="left:17px;top:17px" width="16" height="16" viewBox="0 0 16 16"><rect x="0" y="0" width="16" height="16" fill="#222"/><rect x="1" y="1" width="14" height="7" fill="#f4f0f4"/><path d="M2,3 L5,2.5 L8,4 L11,3 L14,2" stroke="#c080c0" fill="none" stroke-width="1.2"/><path d="M2,5.5 H14" stroke="#d0c070" stroke-width="1"/><path d="M1,7 H15" stroke="#60b060" stroke-width="1"/><rect x="1" y="8" width="14" height="1.2" fill="#888"/><rect x="1" y="9.5" width="14" height="5.5" fill="#fff"/><rect x="2" y="10" width="3" height="4" fill="#e00"/><rect x="6" y="10" width="3" height="4" fill="#00c"/><rect x="10" y="10" width="4" height="4" fill="#0d0"/></svg>
<div class="tb" style="left:35px;top:17px;color:#fff;font-weight:bold;font-size:12px;line-height:16px;transform:scaleX(0.96);transform-origin:0 0">ソフトサーモ計測－計測1 － [折れ線グラフ 1]</div>
<div class="btn" style="left:818px;top:18px;width:16px;height:14px"><div class="a" style="left:3px;top:8px;width:6px;height:2px;background:#000"></div></div>
<div class="btn" style="left:834px;top:18px;width:16px;height:14px"><div class="a" style="left:3px;top:2px;width:9px;height:8px;border:1px solid #000;border-top-width:2px"></div></div>
<div class="btn" style="left:852px;top:18px;width:16px;height:14px"><svg class="a" style="left:3px;top:2px" width="9" height="8"><path d="M0.5,0.5 L8,7.5 M8,0.5 L0.5,7.5" stroke="#000" stroke-width="1.6"/></svg></div>
<!-- menu bar -->
<svg class="a" style="left:19px;top:36px" width="16" height="16" viewBox="0 0 16 16"><rect x="0" y="0" width="16" height="16" fill="#222"/><rect x="1" y="1" width="14" height="7" fill="#f4f0f4"/><path d="M2,3 L5,2.5 L8,4 L11,3 L14,2" stroke="#c080c0" fill="none" stroke-width="1.2"/><path d="M2,5.5 H14" stroke="#d0c070" stroke-width="1"/><path d="M1,7 H15" stroke="#60b060" stroke-width="1"/><rect x="1" y="8" width="14" height="1.2" fill="#888"/><rect x="1" y="9.5" width="14" height="5.5" fill="#fff"/><rect x="2" y="10" width="3" height="4" fill="#e00"/><rect x="6" y="10" width="3" height="4" fill="#00c"/><rect x="10" y="10" width="4" height="4" fill="#0d0"/></svg>
<div class="tb" style="left:42px;top:36px;color:#808080;text-shadow:1px 1px 0 #fff;transform:scaleX(0.68);transform-origin:0 0">ファイル(<u>F</u>)</div>
<div class="tb" style="left:99px;top:36px">表示(<u>D</u>)</div>
<div class="tb" style="left:153px;top:36px">設定(<u>Z</u>)</div>
<div class="tb" style="left:206px;top:36px">測定(<u>S</u>)</div>
<div class="tb" style="left:258px;top:36px;transform:scaleX(0.68);transform-origin:0 0">ウィンドウ(<u>W</u>)</div>
<div class="tb" style="left:326px;top:36px;transform:scaleX(0.77);transform-origin:0 0">ヘルプ(<u>H</u>)</div>
<!-- mdi buttons -->
<div class="btn" style="left:818px;top:37px;width:16px;height:14px"><div class="a" style="left:3px;top:8px;width:6px;height:2px;background:#000"></div></div>
<div class="btn" style="left:834px;top:37px;width:16px;height:14px"><div class="a" style="left:5px;top:1px;width:6px;height:5px;border:1px solid #000;border-top-width:2px"></div><div class="a" style="left:3px;top:4px;width:6px;height:6px;border:1px solid #000;border-top-width:2px;background:#d4d0c8"></div></div>
<div class="btn" style="left:852px;top:37px;width:16px;height:14px"><svg class="a" style="left:3px;top:2px" width="9" height="8"><path d="M0.5,0.5 L8,7.5 M8,0.5 L0.5,7.5" stroke="#000" stroke-width="1.6"/></svg></div>
<!-- toolbar band -->
<div class="raised1" style="left:15px;top:54px;width:855px;height:33px"></div>
<div class="btnp" style="left:23px;top:58px;width:25px;height:25px"><div class="tb" style="left:1px;top:5px;width:23px;text-align:center;font-size:12px">D1</div></div>
<div class="btn" style="left:48px;top:58px;width:25px;height:25px"><div class="tb" style="left:0px;top:5px;width:23px;text-align:center;font-size:12px">D2</div></div>
<div class="btn" style="left:73px;top:58px;width:25px;height:25px"><div class="tb" style="left:0px;top:5px;width:23px;text-align:center;font-size:12px">D3</div></div>
<div class="btn" style="left:105px;top:58px;width:25px;height:25px"><div class="tb" style="left:0px;top:5px;width:23px;text-align:center;font-size:12px">Y1</div></div>
<div class="btn" style="left:130px;top:58px;width:25px;height:25px"><div class="tb" style="left:0px;top:5px;width:23px;text-align:center;font-size:12px">Y2</div></div>
<div class="btn" style="left:155px;top:58px;width:25px;height:25px"><div class="tb" style="left:0px;top:5px;width:23px;text-align:center;font-size:12px">Y3</div></div>
<div class="btn" style="left:187px;top:58px;width:25px;height:25px"><svg class="a" style="left:-1px;top:-1px" width="25" height="25" viewBox="0 0 25 25"><path d="M3,13 L12.5,3 L22,13 Z M11,13 H15 V23 H11 Z" fill="#000"/></svg></div>
<div class="btn" style="left:212px;top:58px;width:25px;height:25px"><svg class="a" style="left:-1px;top:-1px" width="25" height="25" viewBox="0 0 25 25"><path d="M11,3 H15 V13 H11 Z M3,13 L22,13 L12.5,23 Z" fill="#000"/></svg></div>
<div class="btn" style="left:237px;top:58px;width:25px;height:25px"><svg class="a" style="left:-1px;top:-1px" width="25" height="25" viewBox="0 0 25 25"><path d="M4,12 L12.5,3 L21,12 Z M4,14 L21,14 L12.5,23 Z" fill="#000"/></svg></div>
<div class="btn" style="left:262px;top:58px;width:25px;height:25px"><svg class="a" style="left:-1px;top:-1px" width="25" height="25" viewBox="0 0 25 25"><path d="M4,3 L21,3 L12.5,13 Z M12.5,13 L21,23 L4,23 Z" fill="#000"/></svg></div>
<div class="btn" style="left:294px;top:58px;width:25px;height:25px"><svg class="a" style="left:-1px;top:-1px" width="25" height="25" viewBox="0 0 25 25"><path d="M4,13 L13,4 L13,22 Z M13,13 L21.5,4 L21.5,22 Z" fill="#000"/></svg></div>
<div class="btn" style="left:319px;top:58px;width:25px;height:25px"><svg class="a" style="left:-1px;top:-1px" width="25" height="25" viewBox="0 0 25 25"><path d="M3,13 L13,3 L13,23 Z M13,11 H23 V15 H13 Z" fill="#000"/></svg></div>
<div class="btn" style="left:344px;top:58px;width:25px;height:25px"><svg class="a" style="left:-1px;top:-1px" width="25" height="25" viewBox="0 0 25 25"><path d="M7,7 H19 V19 H7 Z" fill="#000"/></svg></div>
<div class="btn" style="left:369px;top:58px;width:25px;height:25px"><svg class="a" style="left:-1px;top:-1px" width="25" height="25" viewBox="0 0 25 25"><path d="M3,11 H13 V15 H3 Z M13,3 L23,13 L13,23 Z" fill="#000"/></svg></div>
<div class="btn" style="left:394px;top:58px;width:25px;height:25px"><svg class="a" style="left:-1px;top:-1px" width="25" height="25" viewBox="0 0 25 25"><path d="M4,4 L12.5,13 L4,22 Z M12.5,4 L21,13 L12.5,22 Z" fill="#000"/></svg></div>
<div class="btn" style="left:419px;top:58px;width:25px;height:25px"><svg class="a" style="left:-1px;top:-1px" width="25" height="25" viewBox="0 0 25 25"><path d="M3,13 L12.5,3.5 L12.5,22.5 Z M14,3.5 L23.5,13 L14,22.5 Z" fill="#000"/></svg></div>
<div class="btn" style="left:444px;top:58px;width:25px;height:25px"><svg class="a" style="left:-1px;top:-1px" width="25" height="25" viewBox="0 0 25 25"><path d="M2.5,3.5 L12,13 L2.5,22.5 Z M23.5,3.5 L23.5,22.5 L13,13 Z" fill="#000"/></svg></div>
<div class="btn" style="left:479px;top:58px;width:25px;height:25px"><svg class="a" style="left:-1px;top:-1px" width="25" height="25" viewBox="0 0 25 25">
<path d="M6,6 H21 M6,9 H21 M6,12 H21 M6,15 H21 M6,18 H21" stroke="#888" stroke-width="0.6"/>
<path d="M6.5,5 V21 H21" stroke="#333" fill="none" stroke-width="1"/>
<path d="M7,19 L10,18 L13,12 L16,18 L20,19" stroke="#e33" fill="none" stroke-width="1"/>
<path d="M13,5 V20" stroke="#22d" stroke-width="1.2"/>
<path d="M7,21.5 H21" stroke="#555" stroke-width="1" stroke-dasharray="1 2"/></svg></div>
<!-- chart panel -->
<div class="raised1" style="left:23px;top:95px;width:839px;height:838px"></div>
<div class="a" style="left:31px;top:103px;width:823px;height:770px;background:#fff"></div>
<svg class="a" style="left:31px;top:103px;font-family:'Liberation Mono',monospace;font-size:11.5px" width="823" height="770" viewBox="31 103 823 770">
<style>.ct{font-family:"Liberation Mono",monospace;font-size:11px}</style>
<path d="M94.5,125 L94.5,804" stroke="#800000" stroke-width="1"/>
<path d="M87,126.5 L94,126.5" stroke="#800000" stroke-width="1"/>
<text transform="translate(52.2,129.5) scale(1,1.22)" textLength="32.2" lengthAdjust="spacingAndGlyphs" fill="#800000" class="ct">-50.0</text>
<path d="M87,193.5 L94,193.5" stroke="#800000" stroke-width="1"/>
<text transform="translate(52.2,196.5) scale(1,1.22)" textLength="32.2" lengthAdjust="spacingAndGlyphs" fill="#800000" class="ct">-55.0</text>
<path d="M87,261.5 L94,261.5" stroke="#800000" stroke-width="1"/>
<text transform="translate(52.2,264.5) scale(1,1.22)" textLength="32.2" lengthAdjust="spacingAndGlyphs" fill="#800000" class="ct">-60.0</text>
<path d="M87,329.5 L94,329.5" stroke="#800000" stroke-width="1"/>
<text transform="translate(52.2,332.5) scale(1,1.22)" textLength="32.2" lengthAdjust="spacingAndGlyphs" fill="#800000" class="ct">-65.0</text>
<path d="M87,397.5 L94,397.5" stroke="#800000" stroke-width="1"/>
<text transform="translate(52.2,400.5) scale(1,1.22)" textLength="32.2" lengthAdjust="spacingAndGlyphs" fill="#800000" class="ct">-70.0</text>
<path d="M87,465.5 L94,465.5" stroke="#800000" stroke-width="1"/>
<text transform="translate(52.2,468.5) scale(1,1.22)" textLength="32.2" lengthAdjust="spacingAndGlyphs" fill="#800000" class="ct">-75.0</text>
<path d="M87,533.5 L94,533.5" stroke="#800000" stroke-width="1"/>
<text transform="translate(52.2,536.5) scale(1,1.22)" textLength="32.2" lengthAdjust="spacingAndGlyphs" fill="#800000" class="ct">-80.0</text>
<path d="M87,600.5 L94,600.5" stroke="#800000" stroke-width="1"/>
<text transform="translate(52.2,603.5) scale(1,1.22)" textLength="32.2" lengthAdjust="spacingAndGlyphs" fill="#800000" class="ct">-85.0</text>
<path d="M87,668.5 L94,668.5" stroke="#800000" stroke-width="1"/>
<text transform="translate(52.2,671.5) scale(1,1.22)" textLength="32.2" lengthAdjust="spacingAndGlyphs" fill="#800000" class="ct">-90.0</text>
<path d="M87,736.5 L94,736.5" stroke="#800000" stroke-width="1"/>
<text transform="translate(52.2,739.5) scale(1,1.22)" textLength="32.2" lengthAdjust="spacingAndGlyphs" fill="#800000" class="ct">-95.0</text>
<path d="M87,804.5 L94,804.5" stroke="#800000" stroke-width="1"/>
<text transform="translate(45.5,807.5) scale(1,1.22)" textLength="39.0" lengthAdjust="spacingAndGlyphs" fill="#800000" class="ct">-100.0</text>
<text transform="translate(79,117.5) scale(1,1.22)" textLength="12" lengthAdjust="spacingAndGlyphs" fill="#800000" class="ct">Y1</text>
<path d="M94.5,804.5 L775.5,804.5 L775.5,826.5 L94.5,826.5 Z" fill="none" stroke="#000" stroke-width="1.2"/>
<path d="M95.5,826 L95.5,835" stroke="#000" stroke-width="1"/>
<text transform="translate(99.5,838) scale(1,1.22)" textLength="66.5" lengthAdjust="spacingAndGlyphs" class="ct">2026/01/14</text>
<text transform="translate(99,851) scale(1,1.22)" textLength="66.5" lengthAdjust="spacingAndGlyphs" class="ct">13:14:58.5</text>
<path d="M208.5,826 L208.5,835" stroke="#000" stroke-width="1"/>
<text transform="translate(212.5,838) scale(1,1.22)" textLength="66.5" lengthAdjust="spacingAndGlyphs" class="ct">2026/01/14</text>
<text transform="translate(212,851) scale(1,1.22)" textLength="66.5" lengthAdjust="spacingAndGlyphs" class="ct">15:23:22.0</text>
<path d="M321.5,826 L321.5,835" stroke="#000" stroke-width="1"/>
<text transform="translate(325.5,838) scale(1,1.22)" textLength="66.5" lengthAdjust="spacingAndGlyphs" class="ct">2026/01/14</text>
<text transform="translate(325,851) scale(1,1.22)" textLength="66.5" lengthAdjust="spacingAndGlyphs" class="ct">17:31:45.5</text>
<path d="M434.5,826 L434.5,835" stroke="#000" stroke-width="1"/>
<text transform="translate(438.5,838) scale(1,1.22)" textLength="66.5" lengthAdjust="spacingAndGlyphs" class="ct">2026/01/14</text>
<text transform="translate(438,851) scale(1,1.22)" textLength="66.5" lengthAdjust="spacingAndGlyphs" class="ct">19:40:09.0</text>
<path d="M547.5,826 L547.5,835" stroke="#000" stroke-width="1"/>
<text transform="translate(551.5,838) scale(1,1.22)" textLength="66.5" lengthAdjust="spacingAndGlyphs" class="ct">2026/01/14</text>
<text transform="translate(551,851) scale(1,1.22)" textLength="66.5" lengthAdjust="spacingAndGlyphs" class="ct">21:48:32.5</text>
<path d="M660.5,826 L660.5,835" stroke="#000" stroke-width="1"/>
<text transform="translate(664.5,838) scale(1,1.22)" textLength="66.5" lengthAdjust="spacingAndGlyphs" class="ct">2026/01/14</text>
<text transform="translate(664,851) scale(1,1.22)" textLength="66.5" lengthAdjust="spacingAndGlyphs" class="ct">23:56:56.0</text>
<path d="M775.5,826 L775.5,835" stroke="#000" stroke-width="1"/>
<text transform="translate(779.5,838) scale(1,1.22)" textLength="66.5" lengthAdjust="spacingAndGlyphs" class="ct">2026/01/15</text>
<text transform="translate(779,851) scale(1,1.22)" textLength="59.7" lengthAdjust="spacingAndGlyphs" class="ct">2:05:19.5</text>
<path d="M95.0,560.5 L96.0,559.5 L97.0,560.0 L98.0,561.0 L99.0,561.0 L100.0,559.5 L101.0,560.5 L102.0,562.0 L103.0,560.5 L104.0,561.0 L105.0,562.5 L106.0,560.0 L107.0,560.0 L108.0,560.5 L109.0,562.5 L110.0,561.0 L111.0,560.3 L112.0,561.1 L113.0,560.9 L114.0,560.7 L115.0,561.0 L116.0,560.4 L117.0,560.3 L118.0,562.2 L119.0,562.1 L120.0,561.0 L121.0,562.0 L122.0,562.6 L123.0,560.6 L124.0,562.1 L125.0,563.7 L126.0,561.7 L127.0,563.2 L128.0,563.3 L129.0,562.3 L130.0,562.3 L131.0,561.9 L132.0,562.4 L133.0,561.4 L134.0,561.0 L135.0,562.5 L136.0,561.0 L137.0,562.6 L138.0,562.1 L139.0,562.1 L140.0,563.7 L141.0,562.7 L142.0,561.7 L143.0,561.3 L144.0,563.3 L145.0,564.3 L146.0,561.9 L147.0,562.4 L148.0,561.9 L149.0,563.0 L150.0,561.5 L151.0,561.9 L152.0,562.9 L153.0,563.8 L154.0,562.7 L155.0,562.7 L156.0,562.6 L157.0,561.5 L158.0,563.0 L159.0,562.4 L160.0,560.8 L161.0,563.8 L162.0,562.2 L163.0,562.1 L164.0,563.1 L165.0,563.5 L166.0,561.4 L167.0,561.9 L168.0,563.3 L169.0,561.7 L170.0,561.7 L171.0,561.6 L172.0,563.0 L173.0,561.0 L174.0,561.4 L175.0,560.8 L176.0,562.3 L177.0,562.2 L178.0,562.1 L179.0,562.6 L180.0,562.5 L181.0,559.5 L182.0,560.9 L183.0,562.4 L184.0,560.3 L185.0,560.8 L186.0,561.7 L187.0,560.6 L188.0,559.6 L189.0,561.0 L190.0,560.0 L191.0,560.0 L192.0,559.4 L193.0,560.4 L194.0,561.8 L195.0,560.2 L196.0,561.7 L197.0,559.6 L198.0,560.1 L199.0,561.0 L200.0,561.5 L201.0,559.6 L202.0,559.8 L203.0,561.9 L204.0,562.0 L205.0,562.2 L206.0,560.8 L207.0,561.9 L208.0,560.6 L209.0,561.2 L210.0,562.8 L211.0,561.5 L212.0,561.1 L213.0,563.2 L214.0,561.9 L215.0,563.5 L216.0,561.5 L217.0,560.5 L218.0,563.0 L219.0,563.0 L220.0,562.0 L221.0,562.0 L222.0,561.0 L223.0,561.5 L224.0,562.5 L225.0,561.0 L226.0,561.5 L227.0,563.5 L228.0,565.5 L229.0,566.1 L230.0,566.7 L231.0,566.8 L232.0,563.8 L233.0,565.4 L234.0,564.5 L235.0,565.6 L236.0,567.2 L237.0,567.2 L238.0,564.3 L239.0,565.4 L240.0,565.0 L241.0,564.4 L242.0,566.3 L243.0,564.2 L244.0,566.1 L245.0,565.5 L246.0,565.9 L247.0,565.3 L248.0,565.7 L249.0,565.6 L250.0,563.5 L251.0,564.8 L252.0,565.5 L253.0,564.2 L254.0,563.5 L255.0,563.2 L256.0,564.0 L257.0,563.2 L258.0,561.5 L259.0,560.8 L260.0,561.7 L261.0,561.5 L262.0,558.8 L263.0,559.2 L264.0,559.0 L265.0,557.8 L266.0,557.7 L267.0,557.0 L268.0,556.4 L269.0,555.8 L270.0,557.7 L271.0,556.2 L272.0,555.1 L273.0,557.0 L274.0,557.4 L275.0,556.8 L276.0,554.7 L277.0,556.1 L278.0,554.5 L279.0,557.0 L280.0,555.9 L281.0,555.8 L282.0,554.2 L283.0,557.1 L284.0,554.5 L285.0,554.9 L286.0,556.8 L287.0,555.3 L288.0,554.2 L289.0,554.1 L290.0,556.5 L291.0,553.4 L292.1,555.4 L293.1,554.3 L294.2,554.2 L295.2,554.1 L296.3,554.1 L297.3,553.0 L298.3,555.4 L299.4,553.9 L300.4,555.8 L301.5,552.7 L302.5,554.1 L303.6,553.1 L304.6,553.0 L305.6,554.1 L306.6,555.2 L307.6,555.9 L308.7,555.5 L309.7,556.1 L310.7,555.2 L311.7,556.3 L312.7,553.5 L313.7,554.1 L314.8,556.2 L315.8,556.3 L316.8,555.4 L317.8,554.6 L318.8,556.2 L319.8,555.8 L320.9,556.4 L321.9,557.0 L322.9,556.7 L323.9,555.8 L324.9,557.4 L325.9,556.5 L327.0,555.1 L328.0,555.3 L329.0,555.4 L330.0,558.0 L331.0,555.5 L332.0,556.6 L333.0,557.6 L334.0,557.2 L335.0,558.7 L336.0,556.8 L337.0,557.8 L338.0,556.3 L339.0,558.4 L340.0,557.4 L341.0,557.0 L342.0,558.5 L343.0,556.0 L344.0,556.1 L345.0,559.1 L346.0,556.2 L347.0,557.2 L348.0,557.8 L349.0,556.8 L350.0,557.8 L351.0,556.4 L352.0,559.4 L353.0,559.5 L354.0,558.0 L355.0,551.5 L356.0,543.5 L357.0,552.0 L358.0,557.5 L359.0,557.0 L360.0,556.1 L361.0,557.1 L362.0,555.2 L363.0,555.2 L364.0,556.3 L365.0,557.8 L366.0,556.4 L367.0,556.4 L368.0,556.5 L369.0,555.5 L370.0,557.5 L371.0,556.6 L372.0,556.1 L373.0,555.7 L374.0,556.2 L375.0,555.3 L376.0,556.8 L377.0,556.9 L378.0,556.9 L379.0,556.5 L380.0,558.0 L381.0,555.5 L382.0,556.5 L383.0,558.0 L384.0,557.0 L385.0,557.0 L386.0,556.5 L387.0,558.5 L388.0,556.5 L389.0,557.5 L390.0,558.0 L391.0,558.5 L392.0,558.0 L393.0,558.0 L394.0,557.0 L395.0,555.5 L396.0,556.5 L397.0,557.0 L398.0,557.0 L399.0,558.0 L400.0,558.5 L401.0,555.5 L402.0,557.0 L403.0,556.5 L404.0,558.0 L405.0,555.5 L406.0,557.5 L407.0,558.0 L408.0,558.5 L409.0,557.0 L410.0,557.5 L411.0,555.4 L412.0,557.4 L413.0,555.3 L414.0,557.7 L415.0,556.7 L416.0,556.1 L417.0,556.5 L418.0,557.5 L419.0,557.9 L420.0,557.3 L421.0,555.8 L422.0,557.2 L423.0,557.1 L424.0,557.6 L425.0,557.0 L426.0,555.4 L427.0,555.4 L428.0,555.8 L429.0,557.2 L430.0,554.7 L431.0,556.6 L432.0,557.0 L433.0,554.0 L434.0,555.4 L435.0,554.3 L436.0,553.8 L437.0,555.2 L438.0,556.1 L439.0,555.1 L440.0,554.0 L441.0,553.4 L442.0,554.9 L443.0,554.8 L444.0,553.7 L445.0,553.2 L446.0,556.1 L447.0,555.0 L448.0,554.5 L449.0,554.4 L450.0,553.3 L451.0,554.8 L452.0,555.2 L453.0,553.1 L454.0,555.6 L455.0,554.0 L456.0,553.7 L457.0,552.9 L458.0,555.1 L459.0,555.3 L460.0,556.5 L461.0,554.2 L462.0,555.4 L463.0,555.6 L464.0,555.8 L465.0,555.5 L466.0,556.1 L467.0,556.8 L468.0,554.9 L469.0,556.5 L470.0,557.7 L471.0,555.3 L472.0,557.4 L473.0,556.6 L474.0,555.7 L475.0,557.3 L476.0,557.5 L477.0,559.1 L478.0,558.7 L479.0,558.4 L480.0,559.5 L481.0,558.9 L482.0,558.3 L483.0,558.2 L484.0,559.1 L485.0,557.5 L486.0,555.9 L487.0,558.3 L488.0,555.7 L489.0,557.1 L490.0,555.5 L491.0,556.9 L492.0,558.3 L493.0,556.7 L494.0,556.6 L495.0,556.0 L496.0,557.4 L497.0,556.3 L498.0,556.7 L499.0,556.6 L500.0,555.5 L501.0,556.6 L502.0,556.2 L503.0,555.8 L504.0,556.9 L505.0,556.0 L506.0,556.1 L507.0,556.7 L508.0,556.8 L509.0,556.9 L510.0,558.0 L511.0,557.1 L512.0,558.7 L513.0,558.8 L514.0,555.9 L515.0,557.0 L516.0,556.1 L517.0,559.2 L518.0,556.8 L519.0,559.4 L520.0,557.0 L521.0,558.0 L522.0,557.5 L523.0,557.1 L524.0,559.1 L525.0,558.6 L526.0,558.6 L527.0,559.6 L528.0,558.7 L529.0,558.2 L530.0,559.2 L531.0,556.7 L532.0,557.2 L533.0,559.3 L534.0,556.8 L535.0,558.3 L536.0,558.3 L537.0,559.8 L538.0,558.9 L539.0,557.4 L540.0,556.9 L541.0,558.4 L542.0,558.4 L543.0,558.0 L544.0,558.5 L545.0,559.5 L546.0,558.5 L547.0,557.0 L548.0,560.1 L549.0,560.1 L550.0,557.6 L551.0,559.6 L552.0,557.6 L553.0,557.2 L554.0,560.2 L555.0,559.7 L556.0,558.7 L557.0,558.2 L558.0,558.3 L559.0,558.3 L560.0,558.3 L561.0,559.3 L562.0,558.3 L563.0,558.4 L564.0,559.9 L565.0,560.4 L566.0,559.9 L567.0,557.9 L568.0,560.0 L569.0,560.0 L570.0,558.0 L571.0,558.5 L572.0,559.9 L573.0,559.4 L574.0,558.9 L575.0,557.3 L576.0,558.3 L577.0,559.8 L578.0,559.7 L579.0,558.7 L580.0,560.2 L581.0,558.6 L582.0,558.6 L583.0,558.6 L584.0,560.0 L585.0,559.5 L586.0,560.0 L587.0,558.9 L588.0,558.4 L589.0,557.9 L590.0,559.3 L591.0,558.3 L592.0,558.3 L593.0,559.2 L594.0,559.2 L595.0,558.2 L596.0,558.6 L597.0,557.1 L598.0,559.6 L599.0,557.5 L600.0,558.0 L601.0,558.1 L602.0,558.8 L603.0,559.5 L604.0,558.6 L605.0,559.2 L606.0,559.4 L607.0,558.0 L608.0,559.2 L609.0,560.4 L610.0,559.0 L611.0,559.6 L612.0,560.8 L613.0,560.0 L614.0,560.6 L615.0,558.8 L616.0,560.9 L617.0,559.5 L618.0,560.2 L619.0,560.9 L620.0,562.0 L621.0,561.0 L622.0,562.6 L623.0,562.6 L624.0,561.1 L625.0,559.7 L626.0,561.2 L627.0,559.7 L628.0,560.3 L629.0,561.3 L630.0,560.3 L631.0,559.9 L632.0,560.9 L633.0,559.9 L634.0,561.0 L635.0,561.0 L636.0,560.0 L637.0,561.6 L638.0,561.1 L639.0,562.1 L640.0,560.2 L641.0,560.2 L642.0,561.7 L643.0,562.3 L644.0,562.8 L645.0,560.3 L646.0,560.4 L647.0,562.9 L648.0,561.9 L649.0,560.5 L650.0,561.0 L651.0,560.5 L652.0,561.9 L653.0,561.9 L654.0,560.4 L655.0,562.3 L656.0,563.3 L657.0,560.8 L658.0,560.7 L659.0,561.7 L660.0,561.7 L661.0,560.6 L662.0,560.1 L663.0,561.6 L664.0,562.0 L665.0,560.5 L666.0,560.5 L667.0,561.9 L668.0,560.9 L669.0,560.4 L670.0,560.3 L671.0,561.3 L672.0,561.3 L673.0,559.7 L674.0,562.7 L675.0,562.2 L676.0,560.6 L677.0,560.1 L678.0,561.1 L679.0,562.5 L680.0,561.5 L681.0,561.2 L682.0,559.9 L683.0,561.6 L684.0,560.8 L685.0,563.0 L686.0,560.7 L687.0,563.4 L688.0,564.1 L689.0,561.8 L690.0,564.0 L691.0,563.2 L692.0,561.9 L693.0,562.6 L694.0,562.3 L695.0,564.5 L696.0,564.2 L697.0,563.4 L698.0,565.6 L699.0,565.8 L700.0,565.0 L701.0,565.1 L702.0,565.6 L703.0,565.2 L704.0,563.8 L705.0,566.8 L706.0,564.9 L707.0,564.0 L708.0,565.0 L709.0,566.6 L710.0,564.2 L711.0,564.2 L712.0,566.3 L713.0,567.4 L714.0,567.4 L715.0,565.0 L716.0,566.1 L717.0,566.1 L718.0,567.7 L719.0,567.8 L720.0,567.3 L721.0,567.9 L722.0,568.0 L723.0,565.5 L724.0,568.1 L725.0,565.2 L726.0,566.7 L727.0,566.8 L728.0,565.9 L729.0,567.4 L730.0,565.5 L731.0,567.5 L732.0,567.1 L733.0,568.6 L734.0,567.2 L735.0,567.2 L736.0,566.3 L737.0,567.4 L738.0,567.9 L739.0,567.5 L740.0,567.5 L741.0,566.0 L742.0,566.6 L743.0,567.6 L744.0,567.7 L745.0,567.8 L746.0,568.8 L747.0,566.9 L748.0,569.4 L749.0,567.5 L750.0,567.0 L751.0,569.0 L752.0,568.1 L753.0,568.6 L754.0,567.7 L755.0,567.2 L756.0,568.8 L757.0,567.8 L758.0,569.9 L759.0,567.4 L760.0,568.0 L761.0,570.0 L762.0,569.5 L763.0,568.1 L764.0,569.6 L765.0,569.2 L766.0,569.2 L767.0,568.8 L768.0,569.8 L769.0,567.9 L770.0,567.4 L771.0,568.0 L772.0,569.0" fill="none" stroke="#dd1010" stroke-width="1.8" stroke-linejoin="round"/>
<path d="M95.0,324.2 L95.5,323.5 L96.0,322.8 L96.5,322.0 L97.0,321.3 L97.5,318.8 L98.0,318.1 L98.5,317.3 L99.0,316.6 L99.5,315.9 L100.0,316.4 L100.5,315.7 L101.0,314.9 L101.5,314.2 L102.0,313.5 L102.5,312.8 L103.0,312.0 L103.5,311.3 L104.0,310.6 L104.5,309.9 L105.0,308.6 L105.5,307.8 L106.0,307.1 L106.5,306.4 L107.0,305.7 L107.5,306.1 L108.0,305.4 L108.5,304.7 L109.0,304.0 L109.5,303.3 L110.0,301.3 L110.5,300.6 L111.0,299.9 L111.5,299.2 L112.0,298.4 L112.5,297.1 L113.0,296.4 L113.5,298.2 L114.0,300.0 L114.5,301.8 L115.0,304.9 L115.5,306.7 L116.0,308.5 L116.5,310.3 L117.0,312.1 L117.5,313.9 L118.1,315.7 L118.6,317.6 L119.1,319.4 L119.6,321.2 L120.1,321.8 L120.6,323.6 L121.1,325.4 L121.6,327.2 L122.1,329.1 L122.6,330.3 L123.1,332.1 L123.6,333.9 L124.1,335.7 L124.6,337.5 L125.1,339.3 L125.6,341.2 L126.1,342.9 L126.6,344.0 L127.2,345.1 L127.7,348.5 L128.2,349.4 L128.7,350.2 L129.2,351.0 L129.7,351.6 L130.2,352.2 L130.7,352.7 L131.2,353.0 L131.7,353.2 L132.2,352.4 L132.7,349.2 L133.2,348.4 L133.7,347.6 L134.2,346.8 L134.7,345.9 L135.2,346.9 L135.7,346.1 L136.2,345.3 L136.7,344.5 L137.2,343.7 L137.8,343.5 L138.3,342.7 L138.8,341.9 L139.3,341.1 L139.8,340.3 L140.3,337.6 L140.8,336.8 L141.3,336.0 L141.8,335.2 L142.3,334.4 L142.8,334.2 L143.3,333.4 L143.8,332.6 L144.3,331.8 L144.8,331.0 L145.3,329.6 L145.8,328.8 L146.3,327.9 L146.8,327.1 L147.3,326.3 L147.8,325.5 L148.3,324.7 L148.8,323.9 L149.4,323.1 L149.9,322.3 L150.4,320.9 L150.9,320.1 L151.4,319.3 L151.9,318.4 L152.4,317.6 L152.9,318.0 L153.4,317.2 L153.9,316.4 L154.4,315.6 L154.9,314.8 L155.4,313.4 L155.9,312.6 L156.4,311.8 L156.9,311.0 L157.4,310.1 L157.9,309.9 L158.4,309.1 L158.9,308.3 L159.4,307.5 L159.9,306.7 L160.5,306.5 L161.0,305.7 L161.5,304.9 L162.0,304.1 L162.5,303.3 L163.0,301.3 L163.5,300.4 L164.0,299.6 L164.5,298.8 L165.0,298.0 L165.5,298.4 L166.0,297.6 L166.5,299.3 L167.0,301.1 L167.5,302.2 L168.0,304.0 L168.5,305.7 L169.0,307.5 L169.6,309.2 L170.1,311.0 L170.6,312.7 L171.1,314.5 L171.6,316.2 L172.1,318.0 L172.6,320.3 L173.1,322.1 L173.6,323.8 L174.1,325.6 L174.6,327.3 L175.1,328.5 L175.7,330.2 L176.2,332.0 L176.7,333.7 L177.2,335.5 L177.7,336.6 L178.2,338.4 L178.7,340.1 L179.2,341.8 L179.7,342.9 L180.2,343.3 L180.7,344.2 L181.2,345.1 L181.8,345.9 L182.3,346.6 L182.8,349.7 L183.3,350.2 L183.8,350.7 L184.3,351.0 L184.8,351.2 L185.3,349.2 L185.8,348.5 L186.3,347.7 L186.8,346.9 L187.3,346.2 L187.8,345.4 L188.3,344.6 L188.8,343.9 L189.3,343.1 L189.8,342.4 L190.3,342.8 L190.8,342.0 L191.3,341.3 L191.8,340.5 L192.3,339.7 L192.8,338.4 L193.4,337.6 L193.9,336.8 L194.4,336.1 L194.9,335.3 L195.4,334.5 L195.9,333.8 L196.4,333.0 L196.9,332.2 L197.4,331.5 L197.9,330.1 L198.4,329.4 L198.9,328.6 L199.4,327.8 L199.9,327.1 L200.4,326.9 L200.9,326.1 L201.4,325.4 L201.9,324.6 L202.4,323.8 L202.9,321.9 L203.4,321.1 L203.9,320.3 L204.4,319.6 L204.9,318.8 L205.4,319.2 L205.9,318.5 L206.4,317.7 L206.9,317.0 L207.4,316.2 L207.9,314.2 L208.4,313.5 L208.9,312.7 L209.4,311.9 L209.9,311.2 L210.4,311.6 L211.0,310.8 L211.5,310.1 L212.0,309.3 L212.5,308.5 L213.0,307.8 L213.5,307.0 L214.0,306.2 L214.5,305.5 L215.0,304.7 L215.5,302.2 L216.0,301.4 L216.5,300.6 L217.0,299.9 L217.5,299.1 L218.0,299.5 L218.5,298.8 L219.0,298.0 L219.5,299.6 L220.0,300.6 L220.5,302.2 L221.0,303.7 L221.5,305.3 L222.0,306.9 L222.5,309.7 L223.0,311.3 L223.5,312.9 L224.0,314.5 L224.5,316.1 L225.0,315.8 L225.5,317.4 L226.0,319.0 L226.5,320.6 L227.0,322.2 L227.5,324.4 L228.0,326.0 L228.5,327.5 L229.0,329.1 L229.5,330.7 L230.0,332.3 L230.5,333.9 L231.0,335.5 L231.5,337.1 L232.0,338.7 L232.5,340.2 L233.0,341.8 L233.5,342.8 L234.0,343.7 L234.5,344.6 L235.0,346.0 L235.5,346.8 L236.0,347.5 L236.5,348.1 L237.0,348.7 L237.5,349.8 L238.0,350.2 L238.5,350.5 L239.0,350.6 L239.5,349.9 L240.0,349.7 L240.5,349.0 L241.0,348.2 L241.5,347.5 L242.0,346.7 L242.5,343.6 L243.0,342.9 L243.5,342.1 L244.0,341.4 L244.5,340.6 L245.0,341.7 L245.5,340.9 L246.0,340.2 L246.5,339.5 L247.0,338.7 L247.5,336.2 L248.0,335.4 L248.5,334.7 L249.0,334.0 L249.5,333.2 L250.0,333.7 L250.5,332.9 L251.0,332.2 L251.5,331.4 L252.0,330.7 L252.5,331.2 L253.0,330.4 L253.5,329.7 L254.0,328.9 L254.5,328.2 L255.0,326.8 L255.5,326.1 L256.0,325.4 L256.5,324.6 L257.0,323.9 L257.5,323.1 L258.0,322.4 L258.5,321.6 L259.0,320.9 L259.5,320.2 L260.0,319.4 L260.5,318.7 L261.0,317.9 L261.5,317.2 L262.0,316.4 L262.5,315.1 L263.0,314.4 L263.5,313.6 L264.0,312.9 L264.5,312.1 L265.0,310.2 L265.5,309.5 L266.0,308.7 L266.5,308.0 L267.0,307.2 L267.5,308.3 L268.0,307.5 L268.5,306.8 L269.0,306.1 L269.5,305.3 L270.0,302.8 L270.5,302.0 L271.0,301.3 L271.5,300.5 L272.0,299.8 L272.5,301.9 L273.0,303.3 L273.5,304.8 L274.0,306.3 L274.5,307.7 L275.0,309.2 L275.5,310.7 L276.0,312.1 L276.5,313.6 L277.0,315.0 L277.5,317.1 L278.0,318.6 L278.5,320.0 L279.0,321.5 L279.5,323.0 L280.0,323.2 L280.5,324.7 L281.0,326.2 L281.5,327.6 L282.0,329.1 L282.5,330.6 L283.0,332.0 L283.5,333.5 L284.0,334.9 L284.5,336.4 L285.0,339.7 L285.5,341.1 L286.0,342.6 L286.5,343.5 L287.0,344.4 L287.5,344.6 L288.0,345.3 L288.5,346.0 L289.0,346.7 L289.5,347.3 L290.0,348.4 L290.5,348.8 L291.0,349.2 L291.5,349.5 L292.0,349.6 L292.5,347.0 L293.0,346.1 L293.5,345.3 L294.0,344.5 L294.5,343.6 L295.0,342.8 L295.5,342.0 L296.0,341.2 L296.5,340.3 L297.0,339.5 L297.5,339.9 L298.0,339.0 L298.5,338.2 L299.0,337.4 L299.5,336.5 L300.0,335.7 L300.5,334.9 L301.0,334.0 L301.5,333.2 L302.0,332.4 L302.5,332.1 L303.0,331.3 L303.5,330.5 L304.0,329.7 L304.5,328.8 L305.0,328.0 L305.5,327.2 L306.0,326.3 L306.5,325.5 L307.0,324.7 L307.5,323.8 L308.0,323.0 L308.5,322.2 L309.0,321.3 L309.5,320.5 L310.0,319.7 L310.5,318.8 L311.0,318.0 L311.6,317.2 L312.1,316.4 L312.6,314.3 L313.1,313.5 L313.6,312.7 L314.1,311.8 L314.6,311.0 L315.1,312.0 L315.6,311.1 L316.1,310.3 L316.6,309.5 L317.1,308.6 L317.6,306.6 L318.1,305.8 L318.6,304.9 L319.1,304.1 L319.6,303.3 L320.1,302.5 L320.6,301.6 L321.1,300.8 L321.6,300.0 L322.1,299.1 L322.6,298.9 L323.1,298.1 L323.6,297.2 L324.1,296.4 L324.6,295.6 L325.1,294.7 L325.6,293.9 L326.1,293.1 L326.6,292.2 L327.1,291.4 L327.6,290.0 L328.1,289.2 L328.6,288.3 L329.1,287.5 L329.6,286.7 L330.1,286.4 L330.6,285.6 L331.1,287.9 L331.6,290.1 L332.1,292.4 L332.7,293.4 L333.2,295.7 L333.7,297.9 L334.2,300.2 L334.7,302.4 L335.2,306.5 L335.7,308.7 L336.2,311.0 L336.8,313.2 L337.3,315.5 L337.8,317.1 L338.3,319.4 L338.8,321.6 L339.3,323.9 L339.8,326.1 L340.3,327.8 L340.9,330.0 L341.4,332.3 L341.9,334.5 L342.4,336.2 L342.9,338.2 L343.4,339.4 L343.9,340.5 L344.4,341.6 L344.9,342.5 L345.5,342.1 L346.0,342.7 L346.5,343.2 L347.0,343.4 L347.5,343.3 L348.0,342.5 L348.5,341.8 L349.0,341.0 L349.5,340.3 L350.0,338.9 L350.5,338.2 L351.0,337.4 L351.5,336.7 L352.0,335.9 L352.5,335.8 L353.0,335.0 L353.5,334.3 L354.0,333.5 L354.5,332.8 L355.0,330.9 L355.5,330.1 L356.1,329.4 L356.6,328.6 L357.1,327.9 L357.6,328.3 L358.1,327.6 L358.6,326.8 L359.1,326.1 L359.6,325.3 L360.1,324.6 L360.6,323.8 L361.1,323.1 L361.6,322.4 L362.1,321.6 L362.6,320.9 L363.1,320.1 L363.6,319.4 L364.1,318.6 L364.6,317.9 L365.1,315.9 L365.6,315.2 L366.1,314.4 L366.6,313.7 L367.1,312.9 L367.6,314.6 L368.1,313.8 L368.6,313.1 L369.1,312.4 L369.6,311.6 L370.1,309.1 L370.6,308.3 L371.1,307.6 L371.6,306.8 L372.1,306.1 L372.6,305.9 L373.1,305.2 L373.6,304.4 L374.2,303.7 L374.7,302.9 L375.2,301.0 L375.7,300.3 L376.2,299.5 L376.7,298.8 L377.2,298.0 L377.7,297.9 L378.2,297.1 L378.7,296.4 L379.2,295.6 L379.7,294.9 L380.2,295.9 L380.7,295.2 L381.2,294.4 L381.7,293.7 L382.2,292.9 L382.7,291.0 L383.2,292.9 L383.7,294.7 L384.2,296.6 L384.7,298.5 L385.2,299.2 L385.8,301.0 L386.3,302.9 L386.8,304.8 L387.3,306.6 L387.8,309.1 L388.3,311.0 L388.8,312.9 L389.3,314.7 L389.8,316.6 L390.4,320.3 L390.9,322.1 L391.4,324.0 L391.9,325.9 L392.4,327.8 L392.9,329.6 L393.4,331.5 L393.9,332.6 L394.4,333.7 L394.9,334.7 L395.4,335.6 L396.0,336.4 L396.5,337.0 L397.0,337.6 L397.5,338.0 L398.0,338.2 L398.5,337.5 L399.0,336.7 L399.5,336.0 L400.0,334.1 L400.5,333.3 L401.0,332.6 L401.5,331.9 L402.0,331.1 L402.5,329.8 L403.0,329.0 L403.5,328.3 L404.0,327.6 L404.5,326.8 L405.0,326.7 L405.5,326.0 L406.0,325.2 L406.5,324.5 L407.0,323.8 L407.5,322.4 L408.0,321.7 L408.5,321.0 L409.0,320.2 L409.5,319.5 L410.0,319.4 L410.5,318.6 L411.0,317.9 L411.5,317.1 L412.0,316.4 L412.5,315.1 L413.0,314.3 L413.5,313.6 L414.0,312.9 L414.5,312.1 L415.0,313.2 L415.5,312.5 L416.0,311.7 L416.5,311.0 L417.0,310.3 L417.5,307.1 L418.0,306.4 L418.5,305.7 L419.0,304.9 L419.5,304.2 L420.0,304.6 L420.5,303.9 L421.0,303.2 L421.5,302.4 L422.0,301.7 L422.5,301.0 L423.0,300.2 L423.5,299.5 L424.0,298.8 L424.5,298.0 L425.0,296.7 L425.5,296.0 L426.0,295.2 L426.5,294.5 L427.0,293.8 L427.5,294.8 L428.0,294.1 L428.5,293.3 L429.0,292.6 L429.5,291.9 L430.0,289.3 L430.5,288.6 L431.0,287.9 L431.5,287.1 L432.0,286.4 L432.5,288.3 L433.0,290.2 L433.5,292.0 L434.0,293.9 L434.5,295.8 L435.0,299.5 L435.6,301.4 L436.1,303.2 L436.6,305.1 L437.1,307.0 L437.6,307.7 L438.1,309.6 L438.6,311.4 L439.1,313.3 L439.6,315.2 L440.1,317.7 L440.6,319.6 L441.1,321.4 L441.7,323.3 L442.2,325.2 L442.7,326.5 L443.2,328.4 L443.7,330.2 L444.2,332.1 L444.7,334.0 L445.2,335.8 L445.7,337.0 L446.2,338.1 L446.7,339.1 L447.2,340.0 L447.8,340.9 L448.3,341.7 L448.8,342.4 L449.3,343.0 L449.8,343.5 L450.3,343.2 L450.8,343.4 L451.3,342.6 L451.8,341.9 L452.3,341.1 L452.8,341.0 L453.3,340.2 L453.8,339.5 L454.3,338.7 L454.8,337.9 L455.3,337.2 L455.8,336.4 L456.3,335.7 L456.8,334.9 L457.3,334.2 L457.8,332.2 L458.3,331.4 L458.8,330.7 L459.4,329.9 L459.9,329.2 L460.4,330.8 L460.9,330.0 L461.4,329.3 L461.9,328.5 L462.4,327.8 L462.9,325.8 L463.4,325.1 L463.9,324.3 L464.4,323.5 L464.9,322.8 L465.4,320.8 L465.9,320.1 L466.4,319.3 L466.9,318.6 L467.4,317.8 L467.9,318.2 L468.4,317.5 L468.9,316.7 L469.4,316.0 L469.9,315.2 L470.4,315.1 L470.9,314.3 L471.4,313.5 L471.9,312.8 L472.4,312.0 L472.9,310.7 L473.4,309.9 L473.9,309.2 L474.4,308.4 L474.9,307.6 L475.4,306.9 L476.0,306.1 L476.5,305.4 L477.0,304.6 L477.5,303.8 L478.0,304.3 L478.5,303.5 L479.0,302.8 L479.5,302.0 L480.0,301.3 L480.5,298.1 L481.0,297.3 L481.5,296.6 L482.0,295.8 L482.5,295.1 L483.0,295.5 L483.5,294.8 L484.0,294.0 L484.5,295.7 L485.0,297.3 L485.5,299.0 L486.0,300.6 L486.5,302.3 L487.0,304.0 L487.5,306.2 L488.0,307.9 L488.5,309.6 L489.0,311.2 L489.5,312.9 L490.0,314.5 L490.5,316.2 L491.0,317.9 L491.5,319.5 L492.0,321.2 L492.5,322.2 L493.0,323.9 L493.5,325.6 L494.0,327.2 L494.5,328.9 L495.0,331.1 L495.5,332.8 L496.0,334.5 L496.5,336.1 L497.0,337.3 L497.5,336.5 L498.0,337.4 L498.5,338.2 L499.0,339.0 L499.5,339.7 L500.0,340.3 L500.5,340.9 L501.0,341.3 L501.5,341.6 L502.0,341.8 L502.5,341.7 L503.0,341.0 L503.5,340.3 L504.0,339.6 L504.5,339.0 L505.0,337.7 L505.5,337.0 L506.0,336.3 L506.5,335.6 L507.0,334.9 L507.5,334.2 L508.0,333.5 L508.5,332.8 L509.0,332.2 L509.5,331.5 L510.0,332.0 L510.5,331.3 L511.0,330.6 L511.5,329.9 L512.0,329.2 L512.5,328.5 L513.0,327.8 L513.5,327.1 L514.0,326.5 L514.5,325.8 L515.0,323.9 L515.5,323.2 L516.0,322.5 L516.5,321.8 L517.0,321.1 L517.5,321.0 L518.0,320.3 L518.5,319.7 L519.0,319.0 L519.5,318.3 L520.0,318.2 L520.5,317.5 L521.0,316.8 L521.5,316.1 L522.0,315.4 L522.5,314.1 L523.0,313.5 L523.5,312.8 L524.0,312.1 L524.5,311.4 L525.0,311.3 L525.5,310.6 L526.0,309.9 L526.5,309.2 L527.0,308.5 L527.5,309.1 L528.0,308.4 L528.5,307.7 L529.0,307.0 L529.5,306.3 L530.0,304.4 L530.5,303.7 L531.0,303.0 L531.5,302.3 L532.0,301.6 L532.5,301.0 L533.0,300.3 L533.5,299.6 L534.0,298.9 L534.5,298.2 L535.0,296.9 L535.5,296.2 L536.0,295.5 L536.5,294.8 L537.0,294.2 L537.5,294.7 L538.0,294.0 L538.5,293.3 L539.0,292.6 L539.5,294.1 L540.0,295.5 L540.5,297.0 L541.0,298.5 L541.5,299.9 L542.0,301.4 L542.5,302.9 L543.0,304.3 L543.5,305.8 L544.0,307.2 L544.5,308.7 L545.0,309.6 L545.5,311.0 L546.0,312.5 L546.5,314.0 L547.0,315.4 L547.5,318.1 L548.0,319.6 L548.5,321.0 L549.0,322.5 L549.5,324.0 L550.0,324.2 L550.5,325.7 L551.0,327.1 L551.5,328.6 L552.0,330.1 L552.5,330.3 L553.0,331.8 L553.5,332.7 L554.0,333.6 L554.5,334.4 L555.0,336.3 L555.5,337.0 L556.0,337.7 L556.5,338.3 L557.0,338.8 L557.5,338.0 L558.0,338.4 L558.5,338.7 L559.0,338.8 L559.5,338.1 L560.0,339.8 L560.5,339.1 L561.0,338.4 L561.5,337.7 L562.0,337.1 L562.5,334.6 L563.0,333.9 L563.5,333.2 L564.0,332.5 L564.5,331.8 L565.0,331.7 L565.5,331.0 L566.0,330.3 L566.5,329.6 L567.0,329.0 L567.5,327.1 L568.0,326.4 L568.5,325.7 L569.0,325.0 L569.5,324.3 L570.0,324.8 L570.5,324.1 L571.0,323.4 L571.5,322.7 L572.0,322.1 L572.5,320.2 L573.0,319.5 L573.5,318.8 L574.0,318.1 L574.5,317.4 L575.0,319.1 L575.5,318.4 L576.0,317.7 L576.5,317.0 L577.1,316.4 L577.6,313.3 L578.1,312.6 L578.6,311.9 L579.1,311.2 L579.6,310.5 L580.1,311.0 L580.6,310.3 L581.1,309.6 L581.6,308.9 L582.1,308.3 L582.6,306.4 L583.1,305.7 L583.6,305.0 L584.1,304.3 L584.6,303.6 L585.1,304.7 L585.6,304.0 L586.1,303.3 L586.6,302.6 L587.1,302.0 L587.6,300.1 L588.1,299.4 L588.6,298.7 L589.1,298.0 L589.6,297.3 L590.1,296.0 L590.6,295.3 L591.1,294.6 L591.6,293.9 L592.1,293.3 L592.6,293.8 L593.1,293.1 L593.6,292.4 L594.1,291.7 L594.6,291.0 L595.1,291.6 L595.6,293.3 L596.1,295.1 L596.6,296.9 L597.2,298.6 L597.7,301.6 L598.2,303.3 L598.7,305.1 L599.2,306.9 L599.7,308.6 L600.2,309.2 L600.7,311.0 L601.2,312.7 L601.8,314.5 L602.3,316.2 L602.8,319.2 L603.3,321.0 L603.8,322.7 L604.3,324.5 L604.8,326.3 L605.3,328.6 L605.8,330.4 L606.4,332.1 L606.9,333.9 L607.4,335.7 L607.9,336.3 L608.4,337.3 L608.9,338.3 L609.4,339.2 L609.9,340.0 L610.4,340.8 L611.0,341.5 L611.5,342.0 L612.0,342.5 L612.5,342.8 L613.0,343.0 L613.5,342.4 L614.0,341.8 L614.5,341.2 L615.0,341.2 L615.5,340.6 L616.0,340.0 L616.5,339.4 L617.0,338.8 L617.5,337.0 L618.0,336.4 L618.5,335.8 L619.0,335.2 L619.5,334.6 L620.0,333.4 L620.5,332.8 L621.0,332.2 L621.5,331.6 L622.0,331.0 L622.5,332.2 L623.0,331.5 L623.5,330.9 L624.0,330.3 L624.5,329.7 L625.0,329.7 L625.5,329.1 L626.0,328.5 L626.5,327.9 L627.0,327.3 L627.5,324.9 L628.0,324.3 L628.5,323.7 L629.0,323.1 L629.5,322.5 L630.0,321.3 L630.5,320.7 L631.0,320.1 L631.5,319.5 L632.0,318.9 L632.5,318.9 L633.0,318.3 L633.5,317.7 L634.0,317.1 L634.5,316.5 L635.0,316.5 L635.5,315.9 L636.0,315.3 L636.5,314.7 L637.0,314.1 L637.5,312.3 L638.0,311.7 L638.5,311.1 L639.0,310.5 L639.5,309.9 L640.0,309.9 L640.5,309.3 L641.0,308.7 L641.5,308.1 L642.0,307.5 L642.5,306.8 L643.0,306.2 L643.5,305.6 L644.0,305.0 L644.5,304.4 L645.0,304.4 L645.5,303.8 L646.0,303.2 L646.5,302.6 L647.0,302.0 L647.5,302.6 L648.0,302.0 L648.5,301.4 L649.0,300.8 L649.5,300.2 L650.0,298.4 L650.5,297.8 L651.0,297.2 L651.5,296.6 L652.0,296.0 L652.5,298.1 L653.0,299.7 L653.5,301.2 L654.0,302.7 L654.5,304.3 L655.0,304.6 L655.5,306.1 L656.0,307.7 L656.5,309.2 L657.0,310.7 L657.5,312.9 L658.0,314.4 L658.5,315.9 L659.0,317.5 L659.5,319.0 L660.0,320.5 L660.5,322.1 L661.1,323.6 L661.6,325.2 L662.1,326.7 L662.6,328.8 L663.1,330.4 L663.6,331.9 L664.1,333.4 L664.6,334.7 L665.1,336.2 L665.6,337.1 L666.1,337.8 L666.6,338.6 L667.1,339.2 L667.6,338.0 L668.1,338.5 L668.6,338.9 L669.1,339.3 L669.6,339.4 L670.1,339.2 L670.6,338.5 L671.1,337.7 L671.6,336.9 L672.1,336.2 L672.6,335.4 L673.1,334.6 L673.6,333.9 L674.2,333.1 L674.7,332.3 L675.2,330.4 L675.7,329.6 L676.2,328.8 L676.7,328.1 L677.2,327.3 L677.7,327.8 L678.2,327.0 L678.7,326.2 L679.2,325.5 L679.7,324.7 L680.2,322.7 L680.7,322.0 L681.2,321.2 L681.8,320.4 L682.3,319.7 L682.8,318.9 L683.3,318.1 L683.8,317.4 L684.3,316.6 L684.8,315.8 L685.3,315.1 L685.8,314.3 L686.3,313.5 L686.8,312.8 L687.3,312.0 L687.8,313.6 L688.3,312.9 L688.8,312.1 L689.3,311.3 L689.9,310.6 L690.4,309.2 L690.9,308.4 L691.4,307.7 L691.9,306.9 L692.4,306.1 L692.9,305.4 L693.4,304.6 L693.9,303.9 L694.4,303.1 L694.9,302.3 L695.4,300.4 L695.9,299.6 L696.4,298.8 L696.9,298.1 L697.4,297.3 L698.0,297.7 L698.5,297.0 L699.0,296.2 L699.5,295.4 L700.0,294.7 L700.5,293.3 L701.0,292.5 L701.5,291.8 L702.0,291.0 L702.5,292.4 L703.0,294.4 L703.5,296.4 L704.0,298.4 L704.5,300.3 L705.0,302.9 L705.5,304.9 L706.0,306.9 L706.5,308.9 L707.0,310.9 L707.5,311.7 L708.0,313.7 L708.5,315.6 L709.0,317.6 L709.5,319.6 L710.0,324.0 L710.5,326.0 L711.1,328.0 L711.6,330.0 L712.1,332.0 L712.6,333.9 L713.1,335.9 L713.6,337.9 L714.1,339.9 L714.6,341.5 L715.1,341.5 L715.6,342.6 L716.1,343.7 L716.6,344.6 L717.1,345.5 L717.6,347.4 L718.1,348.1 L718.6,348.6 L719.1,349.0 L719.6,349.2 L720.1,347.3 L720.6,346.5 L721.1,345.8 L721.6,345.1 L722.1,344.3 L722.6,344.2 L723.1,343.4 L723.6,342.7 L724.1,342.0 L724.7,341.2 L725.2,339.9 L725.7,339.2 L726.2,338.4 L726.7,337.7 L727.2,337.0 L727.7,336.8 L728.2,336.1 L728.7,335.4 L729.2,334.6 L729.7,333.9 L730.2,332.5 L730.7,331.8 L731.2,331.1 L731.7,330.3 L732.2,329.6 L732.7,330.1 L733.2,329.3 L733.8,328.6 L734.3,327.9 L734.8,327.1 L735.3,324.6 L735.8,323.8 L736.3,323.1 L736.8,322.4 L737.3,321.6 L737.8,320.9 L738.3,320.2 L738.8,319.4 L739.3,318.7 L739.8,318.0 L740.3,317.8 L740.8,317.1 L741.3,316.3 L741.8,315.6 L742.4,314.9 L742.9,313.5 L743.4,312.8 L743.9,312.1 L744.4,311.3 L744.9,310.6 L745.4,311.7 L745.9,310.9 L746.4,310.2 L746.9,309.4 L747.4,308.7 L747.9,308.0 L748.4,307.2 L748.9,306.5 L749.4,305.8 L749.9,305.0 L750.4,304.3 L750.9,303.6 L751.5,302.8 L752.0,302.1 L752.5,301.4 L753.0,298.8 L753.5,298.1 L754.0,297.3 L754.5,296.6 L755.0,295.9 L755.5,295.7 L756.0,295.0 L756.5,297.1 L757.0,299.2 L757.5,301.3 L758.0,303.4 L758.5,305.5 L759.0,307.6 L759.5,309.8 L760.0,310.7 L760.6,312.8 L761.1,314.9 L761.6,317.0 L762.1,319.1 L762.6,321.8 L763.1,323.9 L763.6,326.0 L764.1,328.1 L764.6,330.2 L765.1,331.7 L765.6,333.9 L766.1,336.0 L766.6,338.1 L767.1,340.2 L767.6,342.3 L768.1,343.7 L768.7,344.9 L769.2,346.0 L769.7,347.1 L770.2,350.4 L770.7,351.3 L771.2,352.0 L771.7,352.6 L772.2,353.0 L772.7,352.0" fill="none" stroke="#2080d0" stroke-width="1.25" stroke-linejoin="round"/>
<path d="M95.0,312.2 L95.5,311.0 L96.0,309.8 L96.5,308.6 L97.0,307.5 L97.5,306.4 L98.0,305.0 L98.5,304.0 L99.0,303.1 L99.5,302.2 L100.0,301.9 L100.5,301.5 L101.0,302.0 L101.5,302.6 L102.0,304.0 L102.5,304.7 L103.0,305.4 L103.5,306.2 L104.0,305.4 L104.5,306.3 L105.0,307.1 L105.5,308.0 L106.0,309.0 L106.5,309.9 L107.0,310.8 L107.5,311.8 L108.0,314.0 L108.5,315.0 L109.0,316.0 L109.5,317.1 L110.0,316.9 L110.5,318.0 L111.0,319.1 L111.5,320.2 L112.0,322.1 L112.5,323.2 L113.0,322.3 L113.5,320.9 L114.0,319.9 L114.5,318.5 L115.0,317.2 L115.5,315.8 L116.0,313.3 L116.5,312.1 L117.0,310.8 L117.5,309.6 L118.0,309.6 L118.5,308.5 L119.0,307.4 L119.5,306.3 L120.0,304.5 L120.5,303.5 L121.0,302.6 L121.5,301.8 L122.0,300.7 L122.5,300.8 L123.0,301.3 L123.5,301.9 L124.0,302.6 L124.5,303.3 L125.0,304.0 L125.5,304.8 L126.0,306.5 L126.5,307.3 L127.0,308.2 L127.5,309.1 L128.0,310.0 L128.5,311.0 L129.0,311.9 L129.5,312.9 L130.0,313.1 L130.5,314.1 L131.0,315.1 L131.5,316.2 L132.0,317.6 L132.5,318.7 L133.0,319.8 L133.5,320.9 L134.0,321.6 L134.5,322.2 L135.0,320.8 L135.5,319.4 L136.0,319.2 L136.5,317.9 L137.0,316.5 L137.5,315.2 L138.0,313.5 L138.5,312.3 L139.0,311.0 L139.5,309.8 L140.0,307.9 L140.5,306.7 L141.0,305.6 L141.5,304.6 L142.0,304.8 L142.5,303.8 L143.0,303.0 L143.5,302.2 L144.0,300.5 L144.5,300.9 L145.0,301.4 L145.5,302.1 L146.0,303.1 L146.5,303.9 L147.0,304.7 L147.5,305.5 L148.0,307.5 L148.5,308.4 L149.0,309.2 L149.5,310.2 L150.0,311.1 L150.5,312.0 L151.0,313.0 L151.5,314.0 L152.0,314.6 L152.5,315.6 L153.0,316.6 L153.5,317.7 L154.0,317.6 L154.5,318.6 L155.0,319.7 L155.5,320.8 L156.0,323.1 L156.5,322.8 L157.0,321.4 L157.5,320.0 L158.0,318.6 L158.5,317.2 L159.0,315.9 L159.5,314.6 L160.0,312.9 L160.5,311.7 L161.0,310.4 L161.5,309.2 L162.0,307.3 L162.5,306.2 L163.0,305.1 L163.5,304.1 L164.0,303.5 L164.5,302.6 L165.0,301.7 L165.5,301.0 L166.0,300.5 L166.5,301.0 L167.0,301.6 L167.5,302.2 L168.0,304.1 L168.5,304.9 L169.0,305.7 L169.5,306.5 L170.0,306.5 L170.5,307.4 L171.0,308.3 L171.5,309.2 L172.0,310.6 L172.5,311.5 L173.0,312.5 L173.5,313.5 L174.0,314.5 L174.5,315.5 L175.0,316.6 L175.5,317.6 L176.0,318.3 L176.5,319.4 L177.0,320.5 L177.5,321.6 L178.0,323.5 L178.5,322.1 L179.0,320.7 L179.5,319.3 L180.0,316.7 L180.5,315.4 L181.0,314.1 L181.5,312.8 L182.0,312.7 L182.5,311.5 L183.0,310.3 L183.5,309.1 L184.0,307.5 L184.5,306.4 L185.0,305.4 L185.5,304.4 L186.0,303.8 L186.5,302.9 L187.0,302.1 L187.5,301.5 L188.0,302.2 L188.5,302.7 L189.0,303.3 L189.5,304.0 L190.0,303.5 L190.5,304.3 L191.0,305.1 L191.5,305.9 L192.0,306.4 L192.5,307.3 L193.0,308.2 L193.5,309.1 L194.0,311.2 L194.5,312.2 L195.0,313.2 L195.5,314.2 L196.0,315.2 L196.5,316.2 L197.0,317.3 L197.5,318.3 L198.0,319.8 L198.5,320.9 L199.0,322.0 L199.5,323.1 L200.0,322.0 L200.5,320.6 L201.0,319.2 L201.5,317.8 L202.0,316.9 L202.5,315.6 L203.0,314.2 L203.5,313.0 L204.0,310.9 L204.5,309.7 L205.0,308.5 L205.5,307.3 L206.0,307.4 L206.5,306.3 L207.0,305.2 L207.5,304.3 L208.0,303.7 L208.5,302.9 L209.0,302.2 L209.5,301.8 L210.0,300.6 L210.5,301.2 L211.0,301.9 L211.5,302.6 L212.0,304.5 L212.5,305.3 L213.0,306.1 L213.5,306.9 L214.0,306.6 L214.5,307.5 L215.0,308.4 L215.5,309.4 L216.0,311.5 L216.5,312.5 L217.0,313.5 L217.5,314.5 L218.0,314.7 L218.5,315.7 L219.0,316.8 L219.5,317.9 L220.0,319.3 L220.5,320.4 L221.0,321.5 L221.5,322.6 L222.0,322.6 L222.5,321.2 L223.0,319.8 L223.5,318.4 L224.0,316.6 L224.5,315.3 L225.0,314.0 L225.5,312.7 L226.0,311.1 L226.5,309.9 L227.0,308.7 L227.5,307.5 L228.0,306.4 L228.5,305.4 L229.0,304.3 L229.5,303.4 L230.0,302.5 L230.5,301.7 L231.0,301.0 L231.5,301.0 L232.0,302.0 L232.5,302.6 L233.0,303.2 L233.5,304.0 L234.0,304.3 L234.5,305.1 L235.0,305.9 L235.5,306.8 L236.0,307.7 L236.5,308.6 L237.0,309.5 L237.5,310.4 L238.0,311.4 L238.5,312.4 L239.0,313.4 L239.5,314.4 L240.0,315.0 L240.5,316.0 L241.0,317.1 L241.5,318.2 L242.0,319.3 L242.5,320.4 L243.0,321.5 L243.5,322.1 L244.0,321.9 L244.5,320.5 L245.0,319.1 L245.5,317.7 L246.0,315.2 L246.5,313.9 L247.0,312.6 L247.5,311.3 L248.0,309.7 L248.5,308.5 L249.0,307.3 L249.5,306.2 L250.0,306.3 L250.5,305.2 L251.0,304.2 L251.5,303.3 L252.0,302.0 L252.5,301.3 L253.0,300.7 L253.5,301.1 L254.0,302.1 L254.5,302.7 L255.0,303.4 L255.5,304.1 L256.0,304.5 L256.5,305.3 L257.0,306.2 L257.5,307.0 L258.0,307.9 L258.5,308.8 L259.0,309.8 L259.5,310.7 L260.0,312.5 L260.5,313.5 L261.0,314.5 L261.5,315.5 L262.0,315.7 L262.5,316.8 L263.0,317.8 L263.5,318.9 L264.0,320.0 L264.5,321.1 L265.0,322.2 L265.5,321.8 L266.0,320.8 L266.5,319.4 L267.0,318.0 L267.5,316.7 L268.0,314.2 L268.5,312.9 L269.0,311.6 L269.5,310.3 L270.0,309.1 L270.5,307.9 L271.0,306.8 L271.5,305.6 L272.0,305.8 L272.5,304.7 L273.0,303.7 L273.5,302.8 L274.0,301.6 L274.5,300.9 L275.0,300.8 L275.5,301.2 L276.0,301.4 L276.5,302.1 L277.0,302.8 L277.5,303.5 L278.0,304.7 L278.5,305.6 L279.0,306.4 L279.5,307.3 L280.0,307.8 L280.5,308.7 L281.0,309.6 L281.5,310.6 L282.0,312.0 L282.5,313.0 L283.0,314.0 L283.5,315.0 L284.0,316.0 L284.5,317.1 L285.0,318.1 L285.5,319.2 L286.0,319.5 L286.5,320.6 L287.0,321.7 L287.5,320.4 L288.0,320.6 L288.5,319.2 L289.0,317.8 L289.5,316.5 L290.0,313.5 L290.5,312.2 L291.0,311.0 L291.5,309.7 L292.0,309.7 L292.5,308.5 L293.0,307.4 L293.5,306.3 L294.0,305.2 L294.5,304.2 L295.0,303.3 L295.5,302.4 L296.0,301.2 L296.5,300.6 L297.0,300.8 L297.5,301.4 L298.0,302.0 L298.5,302.7 L299.0,303.4 L299.5,304.2 L300.0,305.8 L300.5,306.6 L301.0,307.4 L301.5,308.3 L302.0,308.4 L302.5,309.3 L303.0,310.2 L303.5,311.2 L304.0,312.6 L304.5,313.5 L305.0,314.6 L305.5,315.6 L306.0,316.2 L306.5,317.3 L307.0,318.3 L307.5,319.4 L308.0,320.9 L308.5,322.0 L309.0,322.1 L309.5,320.7 L310.0,318.9 L310.5,317.5 L311.0,316.1 L311.5,314.8 L312.0,312.6 L312.5,311.3 L313.0,310.1 L313.5,308.8 L314.0,307.6 L314.5,306.5 L315.0,305.3 L315.5,304.2 L316.0,304.0 L316.5,303.0 L317.0,302.0 L317.5,301.2 L318.0,300.4 L318.5,300.1 L319.0,300.5 L319.5,301.1 L320.0,302.5 L320.5,303.2 L321.0,303.9 L321.5,304.7 L322.0,305.5 L322.5,306.3 L323.0,307.2 L323.5,308.1 L324.0,307.4 L324.5,308.3 L325.0,309.2 L325.5,310.2 L326.0,311.2 L326.5,312.2 L327.0,313.2 L327.5,314.2 L328.0,316.8 L328.5,317.9 L329.0,319.0 L329.5,320.0 L330.0,321.1 L330.5,322.2 L331.0,321.3 L331.5,319.9 L332.0,317.7 L332.5,316.3 L333.0,315.0 L333.5,313.6 L334.0,313.1 L334.5,311.8 L335.0,310.6 L335.5,309.4 L336.0,307.8 L336.5,306.6 L337.0,305.5 L337.5,304.4 L338.0,303.8 L338.5,302.8 L339.0,301.9 L339.5,301.1 L340.0,299.6 L340.5,299.6 L341.0,300.1 L341.5,300.7 L342.0,301.4 L342.5,302.1 L343.0,302.8 L343.5,303.6 L344.0,305.2 L344.5,306.1 L345.0,306.9 L345.5,307.8 L346.0,307.9 L346.5,308.9 L347.0,309.8 L347.5,310.8 L348.0,312.6 L348.5,313.6 L349.0,314.6 L349.5,315.6 L350.0,315.9 L350.5,316.9 L351.0,318.0 L351.5,319.1 L352.0,319.4 L352.5,320.0 L353.0,318.6 L353.5,317.2 L354.0,316.6 L354.5,315.2 L355.0,313.9 L355.5,312.5 L356.0,311.2 L356.5,310.0 L357.0,308.7 L357.5,307.5 L358.0,305.9 L358.5,304.8 L359.0,303.7 L359.5,302.6 L360.0,302.4 L360.5,301.4 L361.0,300.6 L361.5,299.8 L362.0,298.0 L362.5,298.4 L363.0,299.0 L363.5,299.6 L364.0,301.1 L364.5,301.8 L365.0,302.6 L365.5,303.4 L366.0,303.4 L366.5,304.2 L367.0,305.1 L367.5,306.0 L368.0,307.3 L368.5,308.3 L369.0,309.2 L369.5,310.2 L370.0,311.6 L370.5,312.6 L371.0,313.6 L371.5,314.7 L372.0,315.3 L372.5,316.4 L373.0,317.4 L373.5,318.5 L374.0,320.8 L374.5,320.5 L375.0,319.0 L375.5,317.6 L376.0,315.0 L376.5,313.7 L377.0,312.3 L377.5,311.0 L378.0,310.1 L378.5,308.9 L379.0,307.6 L379.5,306.4 L380.0,305.3 L380.5,304.1 L381.0,303.0 L381.5,302.0 L382.0,301.0 L382.5,300.1 L383.0,299.3 L383.5,298.5 L384.0,297.6 L384.5,298.0 L385.0,298.6 L385.5,299.3 L386.0,300.4 L386.5,301.1 L387.0,301.9 L387.5,302.7 L388.0,303.9 L388.5,304.8 L389.0,305.7 L389.5,306.6 L390.0,307.5 L390.5,308.5 L391.0,309.4 L391.5,310.4 L392.0,311.8 L392.5,312.8 L393.0,313.8 L393.5,314.9 L394.0,315.5 L394.5,316.6 L395.0,317.7 L395.5,318.8 L396.0,319.5 L396.5,318.1 L397.0,316.7 L397.5,315.3 L398.0,314.3 L398.5,313.0 L399.0,311.6 L399.5,310.3 L400.0,309.4 L400.5,308.2 L401.0,307.0 L401.5,305.8 L402.0,304.2 L402.5,303.1 L403.0,302.0 L403.5,301.0 L404.0,300.8 L404.5,300.0 L405.0,299.2 L405.5,298.5 L406.0,298.0 L406.5,298.5 L407.0,299.1 L407.5,299.8 L408.0,300.5 L408.5,301.2 L409.0,302.0 L409.5,302.8 L410.0,304.5 L410.5,305.4 L411.0,306.2 L411.5,307.2 L412.0,307.3 L412.5,308.3 L413.0,309.2 L413.5,310.2 L414.0,310.8 L414.5,311.8 L415.0,312.9 L415.5,313.9 L416.0,315.0 L416.5,316.1 L417.0,317.1 L417.5,318.2 L418.0,318.0 L418.5,316.5 L419.0,315.1 L419.5,313.7 L420.0,312.8 L420.5,311.4 L421.0,310.1 L421.5,308.8 L422.0,307.5 L422.5,306.3 L423.0,305.1 L423.5,303.9 L424.0,302.8 L424.5,301.7 L425.0,300.6 L425.5,299.6 L426.0,299.9 L426.5,299.0 L427.0,298.3 L427.5,297.9 L428.0,297.2 L428.5,297.7 L429.0,298.4 L429.5,299.1 L430.0,299.4 L430.5,300.1 L431.0,300.9 L431.5,301.7 L432.0,303.3 L432.5,304.2 L433.0,305.0 L433.5,305.9 L434.0,307.2 L434.5,308.1 L435.0,309.1 L435.5,310.1 L436.0,310.2 L436.5,311.2 L437.0,312.2 L437.5,313.3 L438.0,314.7 L438.5,315.7 L439.0,316.8 L439.5,317.9 L440.0,316.9 L440.5,315.5 L441.0,314.0 L441.5,312.6 L442.0,310.4 L442.5,309.1 L443.0,307.7 L443.5,306.4 L444.0,305.5 L444.5,304.2 L445.0,303.0 L445.5,301.8 L446.0,301.1 L446.5,300.0 L447.0,298.9 L447.5,297.9 L448.0,297.3 L448.5,296.5 L449.0,295.8 L449.5,295.8 L450.0,295.8 L450.5,296.4 L451.0,297.0 L451.5,297.7 L452.0,298.8 L452.5,299.6 L453.0,300.3 L453.5,301.2 L454.0,302.0 L454.5,302.8 L455.0,303.7 L455.5,304.6 L456.0,305.1 L456.5,306.1 L457.0,307.0 L457.5,308.0 L458.0,308.6 L458.5,309.6 L459.0,310.6 L459.5,311.6 L460.0,313.8 L460.5,314.9 L461.0,316.0 L461.5,316.6 L462.0,314.7 L462.5,313.2 L463.0,311.8 L463.5,310.4 L464.0,309.0 L464.5,307.7 L465.0,306.3 L465.5,305.0 L466.0,304.1 L466.5,302.9 L467.0,301.7 L467.5,300.5 L468.0,299.4 L468.5,298.3 L469.0,297.2 L469.5,296.2 L470.0,295.3 L470.5,294.5 L471.0,293.9 L471.5,294.3 L472.0,293.2 L472.5,293.8 L473.0,294.4 L473.5,295.1 L474.0,296.7 L474.5,297.4 L475.0,298.2 L475.5,299.0 L476.0,300.7 L476.5,301.5 L477.0,302.4 L477.5,303.3 L478.0,303.8 L478.5,304.8 L479.0,305.7 L479.5,306.7 L480.0,307.3 L480.5,308.3 L481.0,309.3 L481.5,310.4 L482.0,311.4 L482.5,312.5 L483.0,313.5 L483.5,313.1 L484.0,311.7 L484.5,310.2 L485.0,308.8 L485.5,307.4 L486.0,306.0 L486.5,304.7 L487.0,303.3 L487.5,302.0 L488.0,300.0 L488.5,298.7 L489.0,297.5 L489.5,296.4 L490.0,296.1 L490.5,295.0 L491.0,294.0 L491.5,293.0 L492.0,292.9 L492.5,292.2 L493.0,292.0 L493.5,292.4 L494.0,292.2 L494.5,292.8 L495.0,293.4 L495.5,294.2 L496.0,294.1 L496.5,294.9 L497.0,295.7 L497.5,296.5 L498.0,297.7 L498.5,298.6 L499.0,299.5 L499.5,300.4 L500.0,301.0 L500.5,301.9 L501.0,302.9 L501.5,303.9 L502.0,305.2 L502.5,306.3 L503.0,307.3 L503.5,308.3 L504.0,309.8 L504.5,310.8 L505.0,311.9 L505.5,310.5 L506.0,308.6 L506.5,307.2 L507.0,305.8 L507.5,304.4 L508.0,302.6 L508.5,301.3 L509.0,300.0 L509.5,298.7 L510.0,298.2 L510.5,297.0 L511.0,295.8 L511.5,294.7 L512.0,294.0 L512.5,292.9 L513.0,291.9 L513.5,291.0 L514.0,289.0 L514.5,288.3 L515.0,288.5 L515.5,289.0 L516.0,289.5 L516.5,290.2 L517.0,290.9 L517.5,291.6 L518.0,292.3 L518.5,293.1 L519.0,293.9 L519.5,294.8 L520.0,296.8 L520.5,297.8 L521.0,298.7 L521.5,299.6 L522.0,299.8 L522.5,300.8 L523.0,301.8 L523.5,302.8 L524.0,304.7 L524.5,305.7 L525.0,306.8 L525.5,307.9 L526.0,307.8 L526.5,308.9 L527.0,309.0 L527.5,307.6 L528.0,306.9 L528.5,305.6 L529.0,304.2 L529.5,302.8 L530.0,301.9 L530.5,300.6 L531.0,299.4 L531.5,298.1 L532.0,295.7 L532.5,294.5 L533.0,293.4 L533.5,292.3 L534.0,291.3 L534.5,290.3 L535.0,289.3 L535.5,288.5 L536.0,288.1 L536.5,287.8 L537.0,288.2 L537.5,288.8 L538.0,290.2 L538.5,290.9 L539.0,291.6 L539.5,292.4 L540.0,292.8 L540.5,293.6 L541.0,294.5 L541.5,295.4 L542.0,295.9 L542.5,296.8 L543.0,297.8 L543.5,298.7 L544.0,300.9 L544.5,301.9 L545.0,302.9 L545.5,303.9 L546.0,304.2 L546.5,305.2 L547.0,306.3 L547.5,307.4 L548.0,308.5 L548.5,309.6 L549.0,308.7 L549.5,307.3 L550.0,306.3 L550.5,304.9 L551.0,303.5 L551.5,302.2 L552.0,300.5 L552.5,299.2 L553.0,298.0 L553.5,296.7 L554.0,295.5 L554.5,294.4 L555.0,293.2 L555.5,292.2 L556.0,290.3 L556.5,289.4 L557.0,288.5 L557.5,287.6 L558.0,287.0 L558.5,287.0 L559.0,287.5 L559.5,288.1 L560.0,289.6 L560.5,290.3 L561.0,291.0 L561.5,291.8 L562.0,292.6 L562.5,293.5 L563.0,294.3 L563.5,295.2 L564.0,296.1 L564.5,297.1 L565.0,298.0 L565.5,299.0 L566.0,300.0 L566.5,301.0 L567.0,302.0 L567.5,303.0 L568.0,304.1 L568.5,305.1 L569.0,306.2 L569.5,307.3 L570.0,307.6 L570.5,308.2 L571.0,306.8 L571.5,305.4 L572.0,304.4 L572.5,303.0 L573.0,301.7 L573.5,300.4 L574.0,298.7 L574.5,297.4 L575.0,296.1 L575.5,294.9 L576.0,295.3 L576.5,294.2 L577.0,293.1 L577.5,292.0 L578.0,290.2 L578.5,289.3 L579.0,288.4 L579.5,287.6 L580.0,287.9 L580.5,288.3 L581.0,288.8 L581.5,289.4 L582.0,289.3 L582.5,290.0 L583.0,290.8 L583.5,291.6 L584.0,292.4 L584.5,293.3 L585.0,294.2 L585.5,295.1 L586.0,296.8 L586.5,297.7 L587.0,298.7 L587.5,299.7 L588.0,299.5 L588.5,300.5 L589.0,301.5 L589.5,302.5 L590.0,304.4 L590.5,305.5 L591.0,306.5 L591.5,307.6 L592.0,307.5 L592.5,307.1 L593.0,305.7 L593.5,304.3 L594.0,303.3 L594.5,302.0 L595.0,300.6 L595.5,299.3 L596.0,298.8 L596.5,297.6 L597.0,296.3 L597.5,295.1 L598.0,293.6 L598.5,292.4 L599.0,291.3 L599.5,290.3 L600.0,288.9 L600.5,288.0 L601.0,287.2 L601.5,286.5 L602.0,287.5 L602.5,288.0 L603.0,288.6 L603.5,289.2 L604.0,289.5 L604.5,290.3 L605.0,291.0 L605.5,291.8 L606.0,291.5 L606.5,292.3 L607.0,293.2 L607.5,294.1 L608.0,296.3 L608.5,297.2 L609.0,298.2 L609.5,299.1 L610.0,299.7 L610.5,300.7 L611.0,301.8 L611.5,302.8 L612.0,304.6 L612.5,305.7 L613.0,306.8 L613.5,307.8 L614.0,307.3 L614.5,305.9 L615.0,304.5 L615.5,303.2 L616.0,303.4 L616.5,302.1 L617.0,300.7 L617.5,299.5 L618.0,297.4 L618.5,296.2 L619.0,295.0 L619.5,293.8 L620.0,293.1 L620.5,292.0 L621.0,290.9 L621.5,289.9 L622.0,288.6 L622.5,287.7 L623.0,286.9 L623.5,286.3 L624.0,286.1 L624.5,286.7 L625.0,287.3 L625.5,287.9 L626.0,289.0 L626.5,289.8 L627.0,290.6 L627.5,291.4 L628.0,291.8 L628.5,292.6 L629.0,293.5 L629.5,294.4 L630.0,296.1 L630.5,297.1 L631.0,298.0 L631.5,299.0 L632.0,300.0 L632.5,301.0 L633.0,302.0 L633.5,303.0 L634.0,304.0 L634.5,305.1 L635.0,306.1 L635.5,307.2 L636.0,306.9 L636.5,305.5 L637.0,304.1 L637.5,302.8 L638.0,302.3 L638.5,301.0 L639.0,299.7 L639.5,298.4 L640.0,296.0 L640.5,294.8 L641.0,293.6 L641.5,292.5 L642.0,292.2 L642.5,291.1 L643.0,290.1 L643.5,289.2 L644.0,287.5 L644.5,286.6 L645.0,285.9 L645.5,285.6 L646.0,286.0 L646.5,286.5 L647.0,287.2 L647.5,287.8 L648.0,288.9 L648.5,289.7 L649.0,290.5 L649.5,291.3 L650.0,292.9 L650.5,293.7 L651.0,294.6 L651.5,295.5 L652.0,295.2 L652.5,296.1 L653.0,297.1 L653.5,298.0 L654.0,299.0 L654.5,300.0 L655.0,301.0 L655.5,302.0 L656.0,303.8 L656.5,304.8 L657.0,305.9 L657.5,306.9 L658.0,305.7 L658.5,304.3 L659.0,303.0 L659.5,301.6 L660.0,300.3 L660.5,299.1 L661.0,297.8 L661.5,296.6 L662.0,296.2 L662.5,295.0 L663.0,293.9 L663.5,292.8 L664.0,290.1 L664.5,289.1 L665.0,288.1 L665.5,287.2 L666.0,286.4 L666.5,285.6 L667.0,285.0 L667.5,285.0 L668.0,286.3 L668.5,286.8 L669.0,287.5 L669.5,288.1 L670.0,288.8 L670.5,289.6 L671.0,290.4 L671.5,291.2 L672.0,292.0 L672.5,292.8 L673.0,293.7 L673.5,294.6 L674.0,295.1 L674.5,296.0 L675.0,296.9 L675.5,297.8 L676.0,300.0 L676.5,301.0 L677.0,301.9 L677.5,302.9 L678.0,303.5 L678.5,304.6 L679.0,305.6 L679.5,306.2 L680.0,304.4 L680.5,303.1 L681.0,301.8 L681.5,300.5 L682.0,299.2 L682.5,298.0 L683.0,296.8 L683.5,295.6 L684.0,295.2 L684.5,294.1 L685.0,293.0 L685.5,291.9 L686.0,290.1 L686.5,289.1 L687.0,288.2 L687.5,287.3 L688.0,286.5 L688.5,285.8 L689.0,285.3 L689.5,285.6 L690.0,285.3 L690.5,285.9 L691.0,286.6 L691.5,287.2 L692.0,288.3 L692.5,289.1 L693.0,289.9 L693.5,290.6 L694.0,291.1 L694.5,291.9 L695.0,292.7 L695.5,293.6 L696.0,294.9 L696.5,295.8 L697.0,296.7 L697.5,297.7 L698.0,299.0 L698.5,300.0 L699.0,300.9 L699.5,301.9 L700.0,302.5 L700.5,303.5 L701.0,304.5 L701.5,304.1 L702.0,303.2 L702.5,301.9 L703.0,300.7 L703.5,299.4 L704.0,297.8 L704.5,296.6 L705.0,295.4 L705.5,294.2 L706.0,293.5 L706.5,292.4 L707.0,291.3 L707.5,290.3 L708.0,289.7 L708.5,288.7 L709.0,287.8 L709.5,287.0 L710.0,286.2 L710.5,285.6 L711.0,285.5 L711.5,285.9 L712.0,285.2 L712.5,285.8 L713.0,286.5 L713.5,287.1 L714.0,288.6 L714.5,289.4 L715.0,290.1 L715.5,290.9 L716.0,292.5 L716.5,293.4 L717.0,294.2 L717.5,295.1 L718.0,295.1 L718.5,296.0 L719.0,296.9 L719.5,297.9 L720.0,299.6 L720.5,300.5 L721.0,301.5 L721.5,302.4 L722.0,301.8 L722.5,302.8 L723.0,303.8 L723.5,302.5 L724.0,302.9 L724.5,301.6 L725.0,300.3 L725.5,299.1 L726.0,296.3 L726.5,295.1 L727.0,294.0 L727.5,292.9 L728.0,292.6 L728.5,291.5 L729.0,290.5 L729.5,289.5 L730.0,289.3 L730.5,288.4 L731.0,287.5 L731.5,286.7 L732.0,284.8 L732.5,284.3 L733.0,284.5 L733.5,285.0 L734.0,285.9 L734.5,286.5 L735.0,287.1 L735.5,287.8 L736.0,288.1 L736.5,288.9 L737.0,289.6 L737.5,290.4 L738.0,291.6 L738.5,292.4 L739.0,293.3 L739.5,294.1 L740.0,295.8 L740.5,296.6 L741.0,297.5 L741.5,298.4 L742.0,298.6 L742.5,299.5 L743.0,300.4 L743.5,301.4 L744.0,301.5 L744.5,302.5 L745.0,302.6 L745.5,301.4 L746.0,301.7 L746.5,300.5 L747.0,299.3 L747.5,298.1 L748.0,296.1 L748.5,294.9 L749.0,293.8 L749.5,292.7 L750.0,291.7 L750.5,290.6 L751.0,289.6 L751.5,288.7 L752.0,287.7 L752.5,286.9 L753.0,286.0 L753.5,285.3 L754.0,285.5 L754.5,285.1 L755.0,285.5 L755.5,286.0 L756.0,285.0 L756.5,285.6 L757.0,286.2 L757.5,286.9 L758.0,289.2 L758.5,289.9 L759.0,290.7 L759.5,291.5 L760.0,291.1 L760.5,291.9 L761.0,292.7 L761.5,293.5 L762.0,294.4 L762.5,295.2 L763.0,296.1 L763.5,297.0 L764.0,297.9 L764.5,298.8 L765.0,299.8 L765.5,300.7 L766.0,301.2 L766.5,302.2 L767.0,301.4 L767.5,300.2 L768.0,299.4 L768.5,298.2 L769.0,297.0 L769.5,295.8 L770.0,295.5 L770.5,294.4 L771.0,293.3 L771.5,292.2 L772.0,290.8 L772.5,289.8 L773.0,288.8" fill="none" stroke="#000" stroke-width="1.4" stroke-linejoin="round"/>
<path d="M348.5,298 L348.5,324" stroke="#000" stroke-width="1.3"/>
<path d="M353.5,297 L353.5,328" stroke="#000" stroke-width="1.3"/>
</svg>
<!-- legend -->
<div class="a mono" style="left:31px;top:875px;width:820px;height:39px;font-size:11.5px;line-height:13px;white-space:pre">
<div class="a" style="left:0;top:0;width:136px;height:39px;background:#fff;color:#800000;padding:1px 0 0 0">Comp-low<br>CH1 [℃]<br>-----</div>
<div class="a" style="left:137px;top:0;width:136px;height:39px;background:#fff;color:#808000;padding:1px 0 0 0">Comp-High<br>CH2 [℃]<br>-----</div>
<div class="a" style="left:274px;top:0;width:136px;height:39px;background:#fff;color:#0a6ed1;padding:1px 0 0 0">MDF-330-2(-50)<br>CH3 [℃]<br>-66.6</div>
<div class="a" style="left:411px;top:0;width:136px;height:39px;background:#fff;color:#1ec81e;padding:1px 0 0 0"> <br>CH4 []<br>-----</div>
<div class="a" style="left:548px;top:0;width:136px;height:39px;background:#fff;color:#000;padding:1px 0 0 0">MDF-190<br>CH5 [℃]<br>-61.6</div>
<div class="a" style="left:685px;top:0;width:135px;height:39px;background:#fff;color:#c00000;padding:1px 0 0 0">2110Temp<br>CH6 [mV]<br>-82.8</div>
</div>
<!-- alarm panel -->
<div class="raised1" style="left:23px;top:933px;width:839px;height:40px"></div>
<div class="btn" style="left:31px;top:941px;width:81px;height:24px"><div class="tb" style="left:7px;top:3px;font-size:13px;line-height:17px;transform:scaleX(0.64);transform-origin:0 0">アラームリセット</div></div>
<div class="sunk2" style="left:119px;top:942px;width:733px;height:23px;background:#fff"></div>
<div class="btn" style="left:835px;top:944px;width:16px;height:19px"><svg class="a" style="left:3px;top:6px" width="8" height="5"><path d="M0,0 H7 L3.5,4 Z" fill="#000"/></svg></div>
<!-- status bar -->
<div class="sunk1" style="left:15px;top:988px;width:150px;height:19px"><div class="tb" style="left:1px;top:1px;transform:scaleX(0.8);transform-origin:0 0">保存ウェイト！！</div></div>
<div class="sunk1" style="left:167px;top:988px;width:703px;height:19px"></div>
<svg class="a" style="left:856px;top:994px" width="13" height="13"><path d="M12,1 L1,12 M12,5 L5,12 M12,9 L9,12" stroke="#808080" stroke-width="1.2"/><path d="M12,2 L2,12 M12,6 L6,12 M12,10 L10,12" stroke="#fff" stroke-width="0.8"/></svg>

<!-- ===== TASKBAR ===== -->
<div class="a" style="left:0;top:1020px;width:1680px;height:30px;background:#d4d0c8;border-top:1px solid #d4d0c8;box-shadow:inset 0 1px 0 #fff"></div>
<div class="btn" style="left:2px;top:1024px;width:62px;height:22px"><svg class="a" style="left:3px;top:2px" width="17" height="16"><path d="M2,2 Q5,1 8,2 L7,7 Q4,6 1,7 Z" fill="#e8602a"/><path d="M9,2 Q12,3 15,2 L14,7 Q11,8 8,7 Z" fill="#5cb82a"/><path d="M1,8 Q4,7 7,8 L6,13 Q3,12 0,13 Z" fill="#3a7ae0"/><path d="M8,8 Q11,9 14,8 L13,13 Q10,14 7,13 Z" fill="#f0c020"/></svg><div class="tb" style="left:19px;top:3px;font-weight:bold;font-size:13px;transform:scaleX(0.74);transform-origin:0 0">スタート</div></div>
<svg class="a" style="left:72px;top:1026px" width="17" height="18"><circle cx="8.5" cy="10" r="6.5" fill="#2f8ae0"/><path d="M4.5,10 H12.5 M12,12.5 Q9,16 5.5,12.5" stroke="#fff" stroke-width="1.8" fill="none"/><path d="M5,7 Q8,4.5 11.5,7" stroke="#fff" stroke-width="1.3" fill="none"/><path d="M1.5,15 Q-1,10 8,5 Q15,1 16,3 Q16,6 12,9" stroke="#7cc4f4" stroke-width="1.3" fill="none"/></svg>
<svg class="a" style="left:94px;top:1026px" width="17" height="17"><rect x="1" y="2" width="14" height="13" rx="3" fill="#3a88d8" stroke="#1a4a98"/><path d="M5,12 L11,5 M8,5 H11 V8" stroke="#fff" stroke-width="1.6" fill="none"/><circle cx="12" cy="4" r="2" fill="#d33"/></svg>
<svg class="a" style="left:117px;top:1027px" width="17" height="16"><path d="M1,4 H6 L8,6 H15 V14 H1 Z" fill="#f0d070" stroke="#b08830"/><circle cx="9" cy="10" r="3.5" fill="#fff" stroke="#888"/></svg>
<div class="btn" style="left:142px;top:1024px;width:160px;height:22px"><svg class="a" style="left:4px;top:3px" width="16" height="14"><rect width="16" height="14" fill="#000" stroke="#999"/><text x="1.5" y="10" font-size="7" fill="#fff" font-family="Liberation Mono">C:\</text></svg><div class="tb" style="left:23px;top:3px;font-size:12px;transform:scaleX(0.84);transform-origin:0 0">transfile.cmd へのショート...</div></div>
<div class="btn" style="left:305px;top:1024px;width:160px;height:22px"><svg class="a" style="left:4px;top:2px" width="17" height="17"><path d="M2,2 L12,3 L15,14 L6,16 Z" fill="#d8c0a0"/><path d="M3,10 Q8,16 15,12" stroke="#c22" stroke-width="2" fill="none"/><rect x="8" y="4" width="6" height="5" fill="#4a6aa8"/><path d="M2,4 L6,12" stroke="#336" stroke-width="1.4"/></svg><div class="tb" style="left:23px;top:3px;font-size:12px;transform:scaleX(0.92);transform-origin:0 0">PhotoImpression 2000</div></div>
<div class="btnp" style="left:468px;top:1024px;width:160px;height:22px"><svg class="a" style="left:4px;top:2px" width="16" height="16" viewBox="0 0 16 16"><rect x="0" y="0" width="16" height="16" fill="#222"/><rect x="1" y="1" width="14" height="7" fill="#f4f0f4"/><path d="M2,3 L5,2.5 L8,4 L11,3 L14,2" stroke="#c080c0" fill="none" stroke-width="1.2"/><path d="M2,5.5 H14" stroke="#d0c070" stroke-width="1"/><path d="M1,7 H15" stroke="#60b060" stroke-width="1"/><rect x="1" y="8" width="14" height="1.2" fill="#888"/><rect x="1" y="9.5" width="14" height="5.5" fill="#fff"/><rect x="2" y="10" width="3" height="4" fill="#e00"/><rect x="6" y="10" width="3" height="4" fill="#00c"/><rect x="10" y="10" width="4" height="4" fill="#0d0"/></svg><div class="tb" style="left:23px;top:3px;font-weight:bold;font-size:12px;transform:scaleX(0.88);transform-origin:0 0">ソフトサーモ　E830</div></div>
<!-- tray -->
<svg class="a" style="left:1547px;top:1029px" width="14" height="14"><rect x="1" y="4" width="12" height="8" fill="#fff" stroke="#333"/><path d="M3,7 H11 M3,9 H11" stroke="#333" stroke-dasharray="1 1"/><path d="M7,1 V4" stroke="#333"/></svg>
<div class="sunk1" style="left:1563px;top:1024px;width:114px;height:23px"></div>
<svg class="a" style="left:1566px;top:1027px" width="16" height="18"><path d="M8,1 L14,3 Q15,11 8,16 Q1,11 2,3 Z" fill="#f0e020" stroke="#777"/><path d="M8,5 V10" stroke="#222" stroke-width="1.6"/><circle cx="8" cy="12.5" r="1" fill="#222"/></svg>
<svg class="a" style="left:1584px;top:1027px" width="16" height="18"><path d="M8,1 L14,3 Q15,11 8,16 Q1,11 2,3 Z" fill="#d02838" stroke="#777"/><path d="M5.5,6 L10.5,11 M10.5,6 L5.5,11" stroke="#fff" stroke-width="1.6"/></svg>
<svg class="a" style="left:1602px;top:1027px" width="16" height="16"><rect x="4" y="8" width="11" height="7" fill="#bbb" stroke="#555" transform="rotate(-20 9 11)"/><path d="M2,2 L8,6 L6,9 Z" fill="#3a3"/></svg>
<svg class="a" style="left:1621px;top:1028px" width="14" height="14"><path d="M7,1 L8.8,5 L13,5.3 L9.8,8.2 L10.8,12.5 L7,10.2 L3.2,12.5 L4.2,8.2 L1,5.3 L5.2,5 Z" fill="#f4e040" stroke="#c8a020" stroke-width="0.8"/></svg>
<div class="tb" style="left:1645px;top:1029px;font-size:12px">2:05</div>

</body></html>
